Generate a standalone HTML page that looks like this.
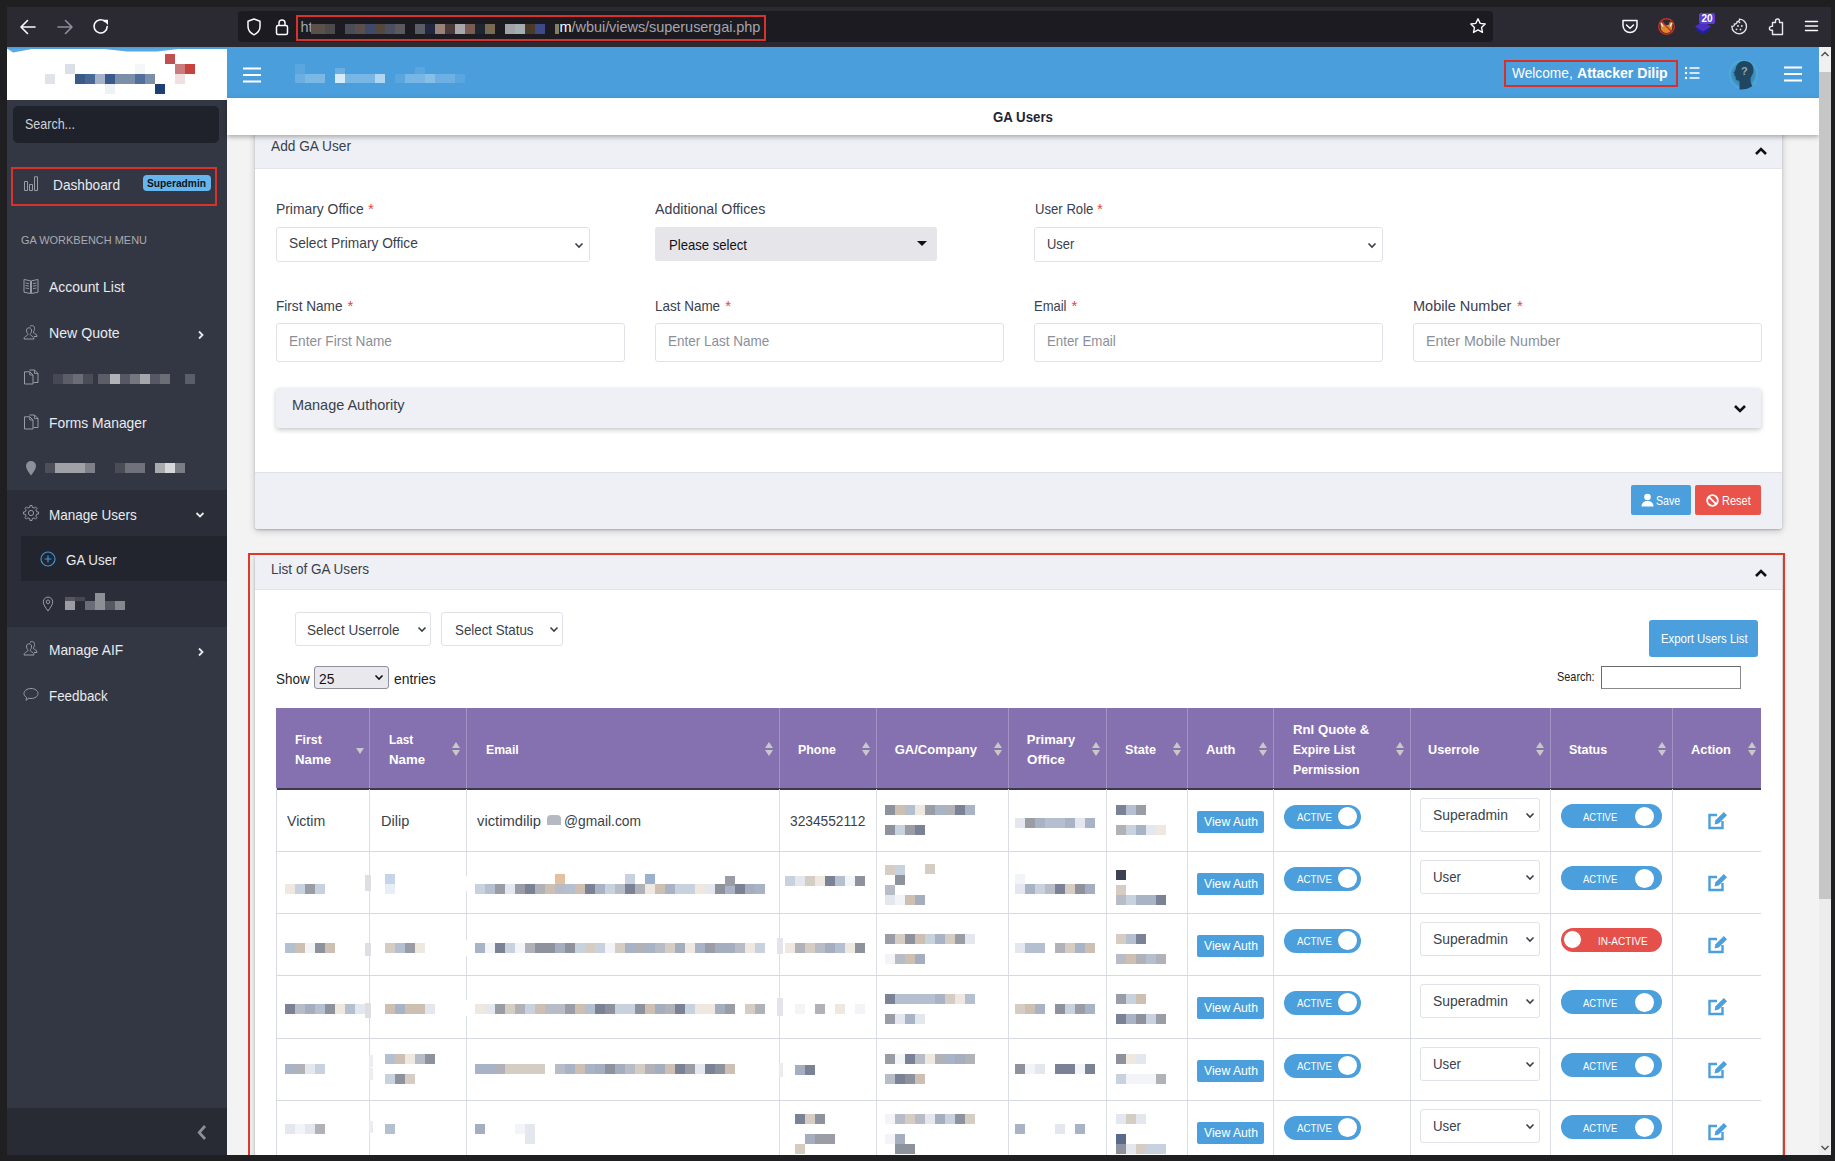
<!DOCTYPE html>
<html><head><meta charset="utf-8">
<style>
*{box-sizing:border-box}
html,body{margin:0;padding:0}
body{width:1835px;height:1161px;overflow:hidden;background:#1f1f21;position:relative;font-family:"Liberation Sans",sans-serif}
.a{position:absolute}
.t{white-space:nowrap}
</style></head><body>

<div class="a" style="left:7px;top:7px;width:1824px;height:40px;background:#2b2a33;"></div>
<div class="a" style="left:238px;top:11px;width:1255px;height:31px;background:#1c1b22;border-radius:4px"></div>
<svg class="a" style="left:18px;top:17px" width="20" height="20" viewBox="0 0 20 20"><path d="M17 10H3.5M9.5 3.5L3 10l6.5 6.5" stroke="#fbfbfe" stroke-width="1.6" fill="none" stroke-linecap="round" stroke-linejoin="round"/></svg>
<svg class="a" style="left:55px;top:17px" width="20" height="20" viewBox="0 0 20 20"><path d="M3 10h13.5M10.5 3.5L17 10l-6.5 6.5" stroke="#8f8f9d" stroke-width="1.6" fill="none" stroke-linecap="round" stroke-linejoin="round"/></svg>
<svg class="a" style="left:91px;top:17px" width="20" height="20" viewBox="0 0 20 20"><path d="M16.2 9.5A6.6 6.6 0 1 1 13.8 4.3" stroke="#fbfbfe" stroke-width="1.6" fill="none" stroke-linecap="round"/><path d="M11.8 2.8h5.2v5.2z" fill="#fbfbfe"/></svg>
<svg class="a" style="left:245px;top:17px" width="18" height="20" viewBox="0 0 18 20"><path d="M9 2L3 4.3v5.2c0 4 2.6 6.6 6 8.3 3.4-1.7 6-4.3 6-8.3V4.3z" stroke="#fbfbfe" stroke-width="1.5" fill="none" stroke-linejoin="round"/></svg>
<svg class="a" style="left:274px;top:17px" width="16" height="20" viewBox="0 0 16 20"><rect x="2.5" y="8.5" width="11" height="9" rx="1.5" stroke="#fbfbfe" stroke-width="1.5" fill="none"/><path d="M5 8.5V6a3 3 0 0 1 6 0v2.5" stroke="#fbfbfe" stroke-width="1.5" fill="none"/></svg>
<div class="a" style="left:296px;top:15px;width:470px;height:26px;background:transparent;border:2px solid #d8322a"></div>
<div class="a t" style="left:300.50px;top:18.47px;font-size:14.5px;line-height:19px;color:#a5a5ad;">ht</div>
<div class="a" style="left:311px;top:24px;width:14px;height:10px;background:#5b5149;"></div>
<div class="a" style="left:325px;top:24px;width:10px;height:10px;background:#4d4a4c;"></div>
<div class="a" style="left:345px;top:24px;width:10px;height:10px;background:#4a4d55;"></div>
<div class="a" style="left:355px;top:24px;width:10px;height:10px;background:#5a4f4c;"></div>
<div class="a" style="left:365px;top:24px;width:10px;height:10px;background:#3f4a6a;"></div>
<div class="a" style="left:375px;top:24px;width:10px;height:10px;background:#54483c;"></div>
<div class="a" style="left:385px;top:24px;width:10px;height:10px;background:#4a5060;"></div>
<div class="a" style="left:395px;top:24px;width:10px;height:10px;background:#5a5a5e;"></div>
<div class="a" style="left:415px;top:24px;width:10px;height:10px;background:#5a5d66;"></div>
<div class="a" style="left:425px;top:24px;width:10px;height:10px;background:#23263f;"></div>
<div class="a" style="left:435px;top:24px;width:10px;height:10px;background:#9a8278;"></div>
<div class="a" style="left:445px;top:24px;width:10px;height:10px;background:#4a3a38;"></div>
<div class="a" style="left:455px;top:24px;width:10px;height:10px;background:#a8a8ac;"></div>
<div class="a" style="left:465px;top:24px;width:10px;height:10px;background:#7a5c52;"></div>
<div class="a" style="left:475px;top:24px;width:10px;height:10px;background:#1e2630;"></div>
<div class="a" style="left:485px;top:24px;width:10px;height:10px;background:#7a6a50;"></div>
<div class="a" style="left:505px;top:24px;width:10px;height:10px;background:#a0a4a8;"></div>
<div class="a" style="left:515px;top:24px;width:10px;height:10px;background:#a4b0b0;"></div>
<div class="a" style="left:525px;top:24px;width:10px;height:10px;background:#4a3a28;"></div>
<div class="a" style="left:535px;top:24px;width:10px;height:10px;background:#3c4a88;"></div>
<div class="a" style="left:555px;top:24px;width:4px;height:10px;background:#8a7c60;"></div>
<div class="a t" style="left:559.50px;top:18.47px;font-size:14.5px;line-height:19px;color:#fbfbfe;letter-spacing:-0.05px">m<span style="color:#a5a5ad">/wbui/views/superusergai.php</span></div>
<svg class="a" style="left:1469px;top:17px" width="18" height="18" viewBox="0 0 18 18"><path d="M9 1.8l2.2 4.6 5 .6-3.7 3.4 1 5-4.5-2.5-4.5 2.5 1-5L1.8 7l5-.6z" stroke="#fbfbfe" stroke-width="1.4" fill="none" stroke-linejoin="round"/></svg>
<svg class="a" style="left:1621px;top:18px" width="18" height="17" viewBox="0 0 18 17"><path d="M2 2.5h14v5a7 7 0 0 1-14 0z" stroke="#fbfbfe" stroke-width="1.5" fill="none" stroke-linejoin="round"/><path d="M5.5 7l3.5 3.2L12.5 7" stroke="#fbfbfe" stroke-width="1.5" fill="none" stroke-linecap="round"/></svg>
<svg class="a" style="left:1657px;top:17px" width="19" height="19" viewBox="0 0 19 19"><path d="M3.5 6.5L6 4.5 7.5 8h4L13 4.5l2.5 2-.3 5.5c-1 2.5-3.2 4-5.7 4s-4.7-1.5-5.7-4z" fill="#e0882a"/><path d="M3.8 5.5l2 4M15.2 5.5l-2 4" stroke="#f0f0f0" stroke-width="1.4"/><circle cx="9.5" cy="9.5" r="7.8" stroke="#c0302a" stroke-width="1.4" fill="none"/><path d="M4 4l11 11" stroke="#c0302a" stroke-width="1.4"/></svg>
<svg class="a" style="left:1694px;top:19px" width="18" height="17" viewBox="0 0 18 17"><path d="M1 10.5l8-5 8 5-8 5z" fill="#22209a"/><path d="M1 7.5l8-5 8 5-8 5z" fill="#4a2fc0"/></svg>
<div class="a" style="left:1699px;top:13px;width:16px;height:11px;background:#5b3fd0;border-radius:2px;color:#fff;font-size:10px;font-weight:bold;line-height:11px;text-align:center">20</div>
<svg class="a" style="left:1730px;top:17px" width="18" height="19" viewBox="0 0 18 19"><path d="M9.5 2.2a7.3 7.3 0 1 1-7.6 7.2 2.2 2.2 0 0 0 2.6-2.4 2.2 2.2 0 0 0 2.6-2.4 2.2 2.2 0 0 0 2.4-2.4z" stroke="#e8e8ec" stroke-width="1.3" fill="none"/><circle cx="9.5" cy="5.3" r="0.9" fill="#e8e8ec"/><circle cx="8" cy="9" r="0.9" fill="#e8e8ec"/><circle cx="11.8" cy="9" r="0.9" fill="#e8e8ec"/><circle cx="6.5" cy="12.3" r="0.9" fill="#e8e8ec"/><circle cx="10.5" cy="12.5" r="0.9" fill="#e8e8ec"/></svg>
<svg class="a" style="left:1767px;top:17px" width="18" height="19" viewBox="0 0 18 19"><path d="M5.5 5.5H8.5V4a2 2 0 0 1 4 0v1.5h3v12h-10v-4.3H4.3a1.9 1.9 0 0 1 0-3.8h1.2z" stroke="#e8e8ec" stroke-width="1.4" fill="none" stroke-linejoin="round"/></svg>
<svg class="a" style="left:1804px;top:19px" width="15" height="14" viewBox="0 0 15 14"><path d="M1.5 2.5h12M1.5 7h12M1.5 11.5h12" stroke="#fbfbfe" stroke-width="1.5" stroke-linecap="round"/></svg>
<div class="a" style="left:7px;top:47px;width:1812px;height:1108px;background:#f3f3f3;"></div>
<div class="a" style="left:7px;top:100px;width:220px;height:1055px;background:#333743;"></div>
<div class="a" style="left:7px;top:47px;width:220px;height:53px;background:#fff;"></div>
<div class="a" style="left:7px;top:47px;width:220px;height:2px;background:#4a9edb;"></div>
<svg class="a" style="left:7px;top:47px" width="220" height="8" viewBox="0 0 220 8"><path d="M0 1.5L6 5.5L28 1.5z M92 1.5L120 4.5H150L176 1.5z" fill="#5aaae0"/></svg>
<div class="a" style="left:165px;top:54px;width:10px;height:10px;background:#c0504f;"></div>
<div class="a" style="left:65px;top:64px;width:10px;height:10px;background:#dae0e8;"></div>
<div class="a" style="left:135px;top:64px;width:10px;height:10px;background:#f5f6f8;"></div>
<div class="a" style="left:175px;top:64px;width:10px;height:10px;background:#c97b7d;"></div>
<div class="a" style="left:185px;top:64px;width:10px;height:10px;background:#c9423e;"></div>
<div class="a" style="left:45px;top:74px;width:10px;height:10px;background:#e0e4ea;"></div>
<div class="a" style="left:75px;top:74px;width:10px;height:10px;background:#3b5a8a;"></div>
<div class="a" style="left:85px;top:74px;width:10px;height:10px;background:#4a6894;"></div>
<div class="a" style="left:95px;top:74px;width:10px;height:10px;background:#a4b3c8;"></div>
<div class="a" style="left:105px;top:74px;width:10px;height:10px;background:#3b5a8a;"></div>
<div class="a" style="left:115px;top:74px;width:10px;height:10px;background:#7b8fab;"></div>
<div class="a" style="left:125px;top:74px;width:10px;height:10px;background:#7b8fab;"></div>
<div class="a" style="left:135px;top:74px;width:10px;height:10px;background:#526e9a;"></div>
<div class="a" style="left:145px;top:74px;width:10px;height:10px;background:#7b8fab;"></div>
<div class="a" style="left:175px;top:74px;width:10px;height:10px;background:#f2dfe1;"></div>
<div class="a" style="left:105px;top:84px;width:10px;height:10px;background:#eef1f5;"></div>
<div class="a" style="left:155px;top:84px;width:10px;height:10px;background:#1e3f74;"></div>
<div class="a" style="left:13px;top:106px;width:206px;height:37px;background:#1f222b;border-radius:5px"></div>
<div class="a t" style="left:25.00px;top:113.80px;font-size:15px;line-height:20px;color:#d0d2d6;transform:scaleX(0.8329);transform-origin:0 0;">Search...</div>
<div class="a" style="left:11px;top:167px;width:206px;height:39px;background:transparent;border:2px solid #d8322a"></div>
<svg class="a" style="left:23px;top:176px" width="16" height="16" viewBox="0 0 16 16"><path d="M1.5 14.5V5.5h3v9zM6.5 14.5V8.5h3v6zM11.5 14.5V0.8h3v13.7z" stroke="#9a9ca4" stroke-width="1" fill="none"/></svg>
<div class="a t" style="left:53.40px;top:174.60px;font-size:15px;line-height:20px;color:#e9ebee;transform:scaleX(0.9131);transform-origin:0 0;">Dashboard</div>
<div class="a" style="left:143px;top:175px;width:68px;height:16px;background:#66b5ec;border-radius:4px"></div>
<div class="a t" style="left:147.00px;top:176.01px;font-size:11.5px;line-height:15px;color:#0d1420;transform:scaleX(0.8878);transform-origin:0 0;font-weight:bold;">Superadmin</div>
<div class="a t" style="left:20.50px;top:233.11px;font-size:11.8px;line-height:15px;color:#a9abb1;transform:scaleX(0.9284);transform-origin:0 0;">GA WORKBENCH MENU</div>
<svg class="a" style="left:23px;top:278px" width="16" height="16" viewBox="0 0 16 16"><path d="M1 1.5l6.5 1.3v12.7L1 14.2zM15 1.5L8.5 2.8v12.7L15 14.2z" stroke="#9a9ca4" stroke-width="1" fill="none"/><path d="M2.5 5l3.5.6M2.5 7.5l3.5.6M2.5 10l3.5.6M13.5 5L10 5.6M13.5 7.5l-3.5.6M13.5 10l-3.5.6" stroke="#9a9ca4" stroke-width="0.9"/></svg>
<div class="a t" style="left:49.00px;top:277.30px;font-size:15px;line-height:20px;color:#e9ebee;transform:scaleX(0.9265);transform-origin:0 0;">Account List</div>
<svg class="a" style="left:23px;top:324px" width="16" height="16" viewBox="0 0 16 16"><path d="M1 15c0-2.5 2.5-3 3.5-3.8.6-.5.5-1.5 0-2C3.5 8.3 3.3 6 3.8 5c.6-1.5 3.6-1.8 4.5 0 .5 1 .4 3.3-.6 4.3-.5.5-.6 1.5 0 2 1 .7 3.3 1.2 3.3 3.7z" stroke="#9a9ca4" stroke-width="1" fill="none"/><path d="M7 2.3c1.5-1.5 4-.8 4.4 1 .3 1.2.1 3.2-.7 4-.4.5-.4 1.3.1 1.7.9.6 3.2 1 3.2 3.5h-3" stroke="#9a9ca4" stroke-width="1" fill="none"/></svg>
<div class="a t" style="left:49.00px;top:323.30px;font-size:15px;line-height:20px;color:#e9ebee;transform:scaleX(0.9423);transform-origin:0 0;">New Quote</div>
<svg class="a" style="left:197px;top:330px" width="8" height="10" viewBox="0 0 8 10"><path d="M2 1.5L5.5 5 2 8.5" stroke="#e8e8ea" stroke-width="1.8" fill="none"/></svg>
<svg class="a" style="left:23px;top:369px" width="16" height="16" viewBox="0 0 16 16"><path d="M1.5 2.8H6.8L10 6V15H1.5z" stroke="#9a9ca4" stroke-width="1" fill="none" stroke-linejoin="round"/><path d="M6.8 2.8V6H10" stroke="#9a9ca4" stroke-width="0.9" fill="none"/><path d="M6.5 1H11.5L15 4.5V13.5H10.5" stroke="#9a9ca4" stroke-width="1" fill="none" stroke-linejoin="round"/><path d="M11.5 1V4.5H15" stroke="#9a9ca4" stroke-width="0.9" fill="none"/></svg>
<div class="a" style="left:53px;top:374px;width:10px;height:10px;background:#464953;"></div>
<div class="a" style="left:63px;top:374px;width:10px;height:10px;background:#5b5e68;"></div>
<div class="a" style="left:73px;top:374px;width:10px;height:10px;background:#6a6d76;"></div>
<div class="a" style="left:83px;top:374px;width:10px;height:10px;background:#4a4d58;"></div>
<div class="a" style="left:98px;top:374px;width:12px;height:10px;background:#5b5e68;"></div>
<div class="a" style="left:110px;top:374px;width:10px;height:10px;background:#b0b2b8;"></div>
<div class="a" style="left:120px;top:374px;width:10px;height:10px;background:#565963;"></div>
<div class="a" style="left:130px;top:374px;width:10px;height:10px;background:#74777f;"></div>
<div class="a" style="left:140px;top:374px;width:10px;height:10px;background:#a4a6ac;"></div>
<div class="a" style="left:150px;top:374px;width:10px;height:10px;background:#565963;"></div>
<div class="a" style="left:160px;top:374px;width:10px;height:10px;background:#6b6e76;"></div>
<div class="a" style="left:185px;top:374px;width:10px;height:10px;background:#5b5e68;"></div>
<svg class="a" style="left:23px;top:414px" width="16" height="16" viewBox="0 0 16 16"><path d="M1.5 2.8H6.8L10 6V15H1.5z" stroke="#9a9ca4" stroke-width="1" fill="none" stroke-linejoin="round"/><path d="M6.8 2.8V6H10" stroke="#9a9ca4" stroke-width="0.9" fill="none"/><path d="M6.5 1H11.5L15 4.5V13.5H10.5" stroke="#9a9ca4" stroke-width="1" fill="none" stroke-linejoin="round"/><path d="M11.5 1V4.5H15" stroke="#9a9ca4" stroke-width="0.9" fill="none"/></svg>
<div class="a t" style="left:49.00px;top:413.30px;font-size:15px;line-height:20px;color:#e9ebee;transform:scaleX(0.9219);transform-origin:0 0;">Forms Manager</div>
<svg class="a" style="left:25px;top:460px" width="12" height="16" viewBox="0 0 12 16"><path d="M6 15.5C3 11.5 1 8.5 1 6a5 5 0 0 1 10 0c0 2.5-2 5.5-5 9.5z" fill="#8d9099"/></svg>
<div class="a" style="left:45px;top:463px;width:10px;height:10px;background:#4d5059;"></div>
<div class="a" style="left:55px;top:463px;width:30px;height:10px;background:#9fa1a7;"></div>
<div class="a" style="left:85px;top:463px;width:10px;height:10px;background:#7d8088;"></div>
<div class="a" style="left:115px;top:463px;width:10px;height:10px;background:#4a4d56;"></div>
<div class="a" style="left:125px;top:463px;width:20px;height:10px;background:#6f727a;"></div>
<div class="a" style="left:155px;top:463px;width:10px;height:10px;background:#a8aab0;"></div>
<div class="a" style="left:165px;top:463px;width:10px;height:10px;background:#d6d7da;"></div>
<div class="a" style="left:175px;top:463px;width:10px;height:10px;background:#7a7d85;"></div>
<div class="a" style="left:7px;top:490px;width:220px;height:137px;background:#2b2e38;"></div>
<div class="a" style="left:21px;top:536px;width:206px;height:45px;background:#22252d;"></div>
<svg class="a" style="left:22px;top:504px" width="18" height="18" viewBox="0 0 18 18"><path d="M14.67 7.76 L16.53 7.96 L16.53 10.04 L14.67 10.24 L13.88 12.13 L15.06 13.59 L13.59 15.06 L12.13 13.88 L10.24 14.67 L10.04 16.53 L7.96 16.53 L7.76 14.67 L5.87 13.88 L4.41 15.06 L2.94 13.59 L4.12 12.13 L3.33 10.24 L1.47 10.04 L1.47 7.96 L3.33 7.76 L4.12 5.87 L2.94 4.41 L4.41 2.94 L5.87 4.12 L7.76 3.33 L7.96 1.47 L10.04 1.47 L10.24 3.33 L12.13 4.12 L13.59 2.94 L15.06 4.41 L13.88 5.87Z" stroke="#9a9ca4" stroke-width="1" fill="none" stroke-linejoin="round"/><circle cx="9" cy="9" r="2.6" stroke="#9a9ca4" stroke-width="1" fill="none"/></svg>
<div class="a t" style="left:49.00px;top:504.80px;font-size:15px;line-height:20px;color:#e9ebee;transform:scaleX(0.9001);transform-origin:0 0;">Manage Users</div>
<svg class="a" style="left:195px;top:511px" width="10" height="8" viewBox="0 0 10 8"><path d="M1.5 2L5 5.5 8.5 2" stroke="#e8e8ea" stroke-width="1.8" fill="none"/></svg>
<svg class="a" style="left:40px;top:551px" width="16" height="16" viewBox="0 0 16 16"><circle cx="8" cy="8" r="7" stroke="#3d95d6" stroke-width="1.2" fill="none"/><path d="M8 4.5v7M4.5 8h7" stroke="#3d95d6" stroke-width="1.2"/></svg>
<div class="a t" style="left:66.00px;top:549.60px;font-size:15px;line-height:20px;color:#e9ebee;transform:scaleX(0.8927);transform-origin:0 0;">GA User</div>
<svg class="a" style="left:42px;top:596px" width="12" height="16" viewBox="0 0 12 16"><path d="M6 15C3.5 11.5 1.3 8.5 1.3 5.8a4.7 4.7 0 0 1 9.4 0c0 2.7-2.2 5.7-4.7 9.2z" stroke="#9a9ca4" stroke-width="1" fill="none"/><circle cx="6" cy="5.8" r="1.8" stroke="#9a9ca4" stroke-width="1" fill="none"/></svg>
<div class="a" style="left:65px;top:597px;width:10px;height:4px;background:#545761;"></div>
<div class="a" style="left:65px;top:601px;width:10px;height:9px;background:#9b9da3;"></div>
<div class="a" style="left:75px;top:597px;width:10px;height:4px;background:#454852;"></div>
<div class="a" style="left:85px;top:601px;width:10px;height:9px;background:#6a6d75;"></div>
<div class="a" style="left:95px;top:593px;width:10px;height:17px;background:#8c8f96;"></div>
<div class="a" style="left:105px;top:601px;width:10px;height:9px;background:#55585f;"></div>
<div class="a" style="left:115px;top:601px;width:10px;height:9px;background:#85878e;"></div>
<svg class="a" style="left:23px;top:640px" width="16" height="16" viewBox="0 0 16 16"><path d="M1 15c0-2.5 2.5-3 3.5-3.8.6-.5.5-1.5 0-2C3.5 8.3 3.3 6 3.8 5c.6-1.5 3.6-1.8 4.5 0 .5 1 .4 3.3-.6 4.3-.5.5-.6 1.5 0 2 1 .7 3.3 1.2 3.3 3.7z" stroke="#9a9ca4" stroke-width="1" fill="none"/><path d="M7 2.3c1.5-1.5 4-.8 4.4 1 .3 1.2.1 3.2-.7 4-.4.5-.4 1.3.1 1.7.9.6 3.2 1 3.2 3.5h-3" stroke="#9a9ca4" stroke-width="1" fill="none"/></svg>
<div class="a t" style="left:49.00px;top:639.80px;font-size:15px;line-height:20px;color:#e9ebee;transform:scaleX(0.9174);transform-origin:0 0;">Manage AIF</div>
<svg class="a" style="left:197px;top:647px" width="8" height="10" viewBox="0 0 8 10"><path d="M2 1.5L5.5 5 2 8.5" stroke="#e8e8ea" stroke-width="1.8" fill="none"/></svg>
<svg class="a" style="left:23px;top:687px" width="16" height="15" viewBox="0 0 16 15"><path d="M8 1.5c3.9 0 7 2.2 7 5s-3.1 5-7 5c-.8 0-1.5-.1-2.2-.3L3 13.3l.6-2.8C2 9.6 1 8.1 1 6.5c0-2.8 3.1-5 7-5z" stroke="#9a9ca4" stroke-width="1" fill="none"/></svg>
<div class="a t" style="left:49.00px;top:685.50px;font-size:15px;line-height:20px;color:#e9ebee;transform:scaleX(0.8906);transform-origin:0 0;">Feedback</div>
<div class="a" style="left:7px;top:1108px;width:220px;height:47px;background:#282b34;"></div>
<svg class="a" style="left:196px;top:1124px" width="11" height="17" viewBox="0 0 11 17"><path d="M9 2L3.2 8.5 9 15" stroke="#8e9098" stroke-width="2.7" fill="none"/></svg>
<div class="a" style="left:227px;top:47px;width:1592px;height:51px;background:#4a9edb;"></div>
<svg class="a" style="left:242px;top:66.5px" width="20" height="16" viewBox="0 0 20 16"><path d="M1 1.5h18M1 8h18M1 14.5h18" stroke="#fff" stroke-width="2"/></svg>
<div class="a" style="left:295px;top:64px;width:10px;height:10px;background:#5aa6de;"></div>
<div class="a" style="left:295px;top:74px;width:10px;height:9px;background:#6aaee2;"></div>
<div class="a" style="left:305px;top:74px;width:20px;height:9px;background:#7ab8e6;"></div>
<div class="a" style="left:335px;top:68px;width:10px;height:6px;background:#6aaee2;"></div>
<div class="a" style="left:335px;top:74px;width:10px;height:9px;background:#d6ebf9;"></div>
<div class="a" style="left:345px;top:74px;width:30px;height:9px;background:#78b6e5;"></div>
<div class="a" style="left:375px;top:74px;width:10px;height:9px;background:#b0d6f2;"></div>
<div class="a" style="left:395px;top:74px;width:10px;height:9px;background:#5aa6de;"></div>
<div class="a" style="left:405px;top:74px;width:20px;height:9px;background:#78b6e5;"></div>
<div class="a" style="left:415px;top:67px;width:10px;height:7px;background:#5aa6de;"></div>
<div class="a" style="left:425px;top:74px;width:10px;height:9px;background:#86c0e9;"></div>
<div class="a" style="left:435px;top:74px;width:20px;height:9px;background:#6eb0e3;"></div>
<div class="a" style="left:455px;top:74px;width:10px;height:9px;background:#5aa6de;"></div>
<div class="a" style="left:1504px;top:60px;width:174px;height:27px;background:transparent;border:2px solid #d5312a"></div>
<div class="a t" style="left:1511.50px;top:63.43px;font-size:15.5px;line-height:20px;color:#fff;transform:scaleX(0.8846);transform-origin:0 0;">Welcome,</div>
<div class="a t" style="left:1577.10px;top:63.43px;font-size:15.5px;line-height:20px;color:#fff;transform:scaleX(0.9078);transform-origin:0 0;font-weight:bold;">Attacker Dilip</div>
<svg class="a" style="left:1684px;top:66px" width="18" height="14" viewBox="0 0 18 14"><circle cx="2" cy="2" r="1.2" fill="#fff"/><circle cx="2" cy="7" r="1.2" fill="#fff"/><circle cx="2" cy="12" r="1.2" fill="#fff"/><path d="M5.5 2h10M5.5 7h10M5.5 12h10" stroke="#fff" stroke-width="1.5"/></svg>
<svg class="a" style="left:1729px;top:60px" width="30" height="30" viewBox="0 0 30 30"><defs><radialGradient id="av" cx="50%" cy="50%" r="50%"><stop offset="0%" stop-color="#2a6f9a"/><stop offset="75%" stop-color="#3a8fbf"/><stop offset="100%" stop-color="#55aede"/></radialGradient></defs><circle cx="14.5" cy="14.5" r="14.5" fill="url(#av)"/><path d="M10.5 29.5V21c-2-.5-3.5-1-3.8-2.5L6.5 16 5 15.5l1-1.5-1.5-1.2c1-1.3 2-2.3 2.3-4.3C7.5 3.5 11 1 15.5 1 21 1 24.5 4.5 24.5 10c0 4-2.5 6-3 8.5 0 3 .5 5.5 2 7.5-3.5 2.8-8.5 3.8-13 3.5z" fill="#1f4762"/><text x="15.3" y="15" font-size="11" font-family="Liberation Sans" font-weight="bold" fill="#9aa4ac" text-anchor="middle">?</text></svg>
<svg class="a" style="left:1783px;top:66px" width="20" height="16" viewBox="0 0 20 16"><path d="M1 1.5h18M1 8h18M1 14.5h18" stroke="#fff" stroke-width="2"/></svg>
<div class="a" style="left:0;top:0;width:1819px;height:1155px;overflow:hidden">
<div class="a" style="left:255px;top:120px;width:1527px;height:409px;background:#fff;border-radius:3px;box-shadow:0 2px 7px rgba(0,0,0,.2),0 1px 2px rgba(0,0,0,.18)"></div>
<div class="a" style="left:255px;top:120px;width:1527px;height:49px;background:#eef0f5;border-bottom:1px solid #e1e4ea"></div>
<div class="a t" style="left:271.00px;top:137.07px;font-size:14.5px;line-height:19px;color:#3a3f4b;transform:scaleX(0.9454);transform-origin:0 0;">Add GA User</div>
<svg class="a" style="left:1754px;top:146px" width="14" height="10" viewBox="0 0 14 10"><path d="M2 8L7 3l5 5" stroke="#111" stroke-width="2.6" fill="none"/></svg>
<div class="a" style="left:227px;top:98px;width:1592px;height:37px;background:#fff;box-shadow:0 2px 5px rgba(0,0,0,.3);z-index:3"></div>
<div class="a t" style="left:993.00px;top:108.47px;font-size:14.5px;line-height:19px;color:#1f2535;transform:scaleX(0.9153);transform-origin:0 0;font-weight:bold;z-index:4;">GA Users</div>
<div class="a t" style="left:276.10px;top:198.80px;font-size:15px;line-height:20px;color:#3a4050;transform:scaleX(0.9246);transform-origin:0 0;">Primary Office</div>
<div class="a t" style="left:368.00px;top:198.80px;font-size:15px;line-height:20px;color:#e5453f;">*</div>
<div class="a" style="left:276px;top:227px;width:314px;height:35px;background:#fff;border:1px solid #dfe2e8;border-radius:3px;"></div>
<div class="a t" style="left:289.00px;top:233.40px;font-size:15px;line-height:20px;color:#3a3f4b;transform:scaleX(0.9161);transform-origin:0 0;">Select Primary Office</div>
<svg class="a" style="left:574px;top:242px" width="10" height="7" viewBox="0 0 10 7"><path d="M1.5 1.5L5 5 8.5 1.5" stroke="#3a3f4b" stroke-width="1.6" fill="none"/></svg>
<div class="a t" style="left:655.20px;top:198.80px;font-size:15px;line-height:20px;color:#3a4050;transform:scaleX(0.9471);transform-origin:0 0;">Additional Offices</div>
<div class="a" style="left:655px;top:227px;width:282px;height:34px;background:#e6e6ea;border-radius:3px"></div>
<div class="a t" style="left:668.50px;top:235.40px;font-size:15px;line-height:20px;color:#111;transform:scaleX(0.8742);transform-origin:0 0;">Please select</div>
<svg class="a" style="left:916px;top:240px" width="12" height="7" viewBox="0 0 12 7"><path d="M1 1h10L6 6z" fill="#111"/></svg>
<div class="a t" style="left:1034.60px;top:198.80px;font-size:15px;line-height:20px;color:#3a4050;transform:scaleX(0.8757);transform-origin:0 0;">User Role</div>
<div class="a t" style="left:1097.00px;top:198.80px;font-size:15px;line-height:20px;color:#e5453f;">*</div>
<div class="a" style="left:1034px;top:227px;width:349px;height:35px;background:#fff;border:1px solid #dfe2e8;border-radius:3px;"></div>
<div class="a t" style="left:1047.40px;top:233.80px;font-size:15px;line-height:20px;color:#3a3f4b;transform:scaleX(0.8622);transform-origin:0 0;">User</div>
<svg class="a" style="left:1367px;top:242px" width="10" height="7" viewBox="0 0 10 7"><path d="M1.5 1.5L5 5 8.5 1.5" stroke="#3a3f4b" stroke-width="1.6" fill="none"/></svg>
<div class="a t" style="left:276.30px;top:295.80px;font-size:15px;line-height:20px;color:#3a4050;transform:scaleX(0.9068);transform-origin:0 0;">First Name</div>
<div class="a t" style="left:347.40px;top:295.80px;font-size:15px;line-height:20px;color:#e5453f;">*</div>
<div class="a" style="left:276px;top:323px;width:349px;height:39px;background:#fff;border:1px solid #dfe2e8;border-radius:3px;"></div>
<div class="a t" style="left:289.30px;top:331.30px;font-size:15px;line-height:20px;color:#8a8f99;transform:scaleX(0.9078);transform-origin:0 0;">Enter First Name</div>
<div class="a t" style="left:655.30px;top:295.80px;font-size:15px;line-height:20px;color:#3a4050;transform:scaleX(0.8976);transform-origin:0 0;">Last Name</div>
<div class="a t" style="left:725.20px;top:295.80px;font-size:15px;line-height:20px;color:#e5453f;">*</div>
<div class="a" style="left:655px;top:323px;width:349px;height:39px;background:#fff;border:1px solid #dfe2e8;border-radius:3px;"></div>
<div class="a t" style="left:668.30px;top:331.30px;font-size:15px;line-height:20px;color:#8a8f99;transform:scaleX(0.8992);transform-origin:0 0;">Enter Last Name</div>
<div class="a t" style="left:1034.30px;top:295.80px;font-size:15px;line-height:20px;color:#3a4050;transform:scaleX(0.8637);transform-origin:0 0;">Email</div>
<div class="a t" style="left:1071.40px;top:295.80px;font-size:15px;line-height:20px;color:#e5453f;">*</div>
<div class="a" style="left:1034px;top:323px;width:349px;height:39px;background:#fff;border:1px solid #dfe2e8;border-radius:3px;"></div>
<div class="a t" style="left:1047.30px;top:331.30px;font-size:15px;line-height:20px;color:#8a8f99;transform:scaleX(0.8861);transform-origin:0 0;">Enter Email</div>
<div class="a t" style="left:1413.30px;top:295.80px;font-size:15px;line-height:20px;color:#3a4050;transform:scaleX(0.9676);transform-origin:0 0;">Mobile Number</div>
<div class="a t" style="left:1517.00px;top:295.80px;font-size:15px;line-height:20px;color:#e5453f;">*</div>
<div class="a" style="left:1413px;top:323px;width:349px;height:39px;background:#fff;border:1px solid #dfe2e8;border-radius:3px;"></div>
<div class="a t" style="left:1426.30px;top:331.30px;font-size:15px;line-height:20px;color:#8a8f99;transform:scaleX(0.9476);transform-origin:0 0;">Enter Mobile Number</div>
<div class="a" style="left:276px;top:388px;width:1485px;height:40px;background:#eef0f5;border-radius:3px;box-shadow:0 2px 5px rgba(0,0,0,.22)"></div>
<div class="a t" style="left:292.20px;top:394.50px;font-size:15px;line-height:20px;color:#3a3f4b;transform:scaleX(0.9636);transform-origin:0 0;">Manage Authority</div>
<svg class="a" style="left:1733px;top:404px" width="14" height="10" viewBox="0 0 14 10"><path d="M2 2l5 5 5-5" stroke="#111" stroke-width="2.6" fill="none"/></svg>
<div class="a" style="left:255px;top:472px;width:1527px;height:57px;background:#eef0f5;border-top:1px solid #dfe2e8;border-radius:0 0 3px 3px"></div>
<div class="a" style="left:1631px;top:485px;width:60px;height:30px;background:#4a9fdc;border-radius:2px"></div>
<svg class="a" style="left:1641px;top:493px" width="13" height="14" viewBox="0 0 13 14"><circle cx="6.5" cy="4" r="3.3" fill="#fff"/><path d="M0.5 13.5c0-3.5 2.5-5.5 6-5.5s6 2 6 5.5z" fill="#fff"/></svg>
<div class="a t" style="left:1655.80px;top:491.82px;font-size:13.5px;line-height:18px;color:#fff;transform:scaleX(0.7866);transform-origin:0 0;">Save</div>
<div class="a" style="left:1695px;top:485px;width:66px;height:30px;background:#e9534a;border-radius:2px"></div>
<svg class="a" style="left:1706px;top:494px" width="13" height="13" viewBox="0 0 13 13"><circle cx="6.5" cy="6.5" r="5.3" stroke="#fff" stroke-width="1.8" fill="none"/><path d="M2.8 2.8l7.4 7.4" stroke="#fff" stroke-width="1.8"/></svg>
<div class="a t" style="left:1722.00px;top:491.82px;font-size:13.5px;line-height:18px;color:#fff;transform:scaleX(0.8167);transform-origin:0 0;">Reset</div>
<div class="a" style="left:255px;top:555px;width:1527px;height:700px;background:#fff;box-shadow:0 2px 7px rgba(0,0,0,.2),0 1px 2px rgba(0,0,0,.18)"></div>
<div class="a" style="left:255px;top:555px;width:1527px;height:35px;background:#eef0f5;border-bottom:1px solid #e1e4ea"></div>
<div class="a" style="left:248px;top:553px;width:1537px;height:620px;background:transparent;border:2px solid #dd3a2c;z-index:5"></div>
<div class="a t" style="left:271.00px;top:558.80px;font-size:15px;line-height:20px;color:#3a3f4b;transform:scaleX(0.9043);transform-origin:0 0;">List of GA Users</div>
<svg class="a" style="left:1754px;top:568px" width="14" height="10" viewBox="0 0 14 10"><path d="M2 8L7 3l5 5" stroke="#111" stroke-width="2.6" fill="none"/></svg>
<div class="a" style="left:295px;top:612px;width:136px;height:34px;background:#fff;border:1px solid #dfe2e8;border-radius:3px;"></div>
<div class="a t" style="left:307.00px;top:619.70px;font-size:15px;line-height:20px;color:#3a3f4b;transform:scaleX(0.9031);transform-origin:0 0;">Select Userrole</div>
<svg class="a" style="left:416.6px;top:626px" width="10" height="7" viewBox="0 0 10 7"><path d="M1.5 1.5L5 5 8.5 1.5" stroke="#3a3f4b" stroke-width="1.6" fill="none"/></svg>
<div class="a" style="left:441px;top:612px;width:122px;height:34px;background:#fff;border:1px solid #dfe2e8;border-radius:3px;"></div>
<div class="a t" style="left:454.50px;top:619.70px;font-size:15px;line-height:20px;color:#3a3f4b;transform:scaleX(0.8882);transform-origin:0 0;">Select Status</div>
<svg class="a" style="left:548.7px;top:626px" width="10" height="7" viewBox="0 0 10 7"><path d="M1.5 1.5L5 5 8.5 1.5" stroke="#3a3f4b" stroke-width="1.6" fill="none"/></svg>
<div class="a" style="left:1649px;top:620px;width:109px;height:37px;background:#4a9fdc;border-radius:3px"></div>
<div class="a t" style="left:1661.00px;top:629.72px;font-size:13.5px;line-height:18px;color:#fff;transform:scaleX(0.8436);transform-origin:0 0;">Export Users List</div>
<div class="a t" style="left:276.00px;top:668.50px;font-size:15px;line-height:20px;color:#222;transform:scaleX(0.8946);transform-origin:0 0;">Show</div>
<div class="a" style="left:314px;top:665.5px;width:75px;height:23px;background:#e9e9ed;border:1px solid #8f8f9d;border-radius:3px"></div>
<div class="a t" style="left:319.30px;top:668.50px;font-size:15px;line-height:20px;color:#111;transform:scaleX(0.9173);transform-origin:0 0;">25</div>
<svg class="a" style="left:374px;top:674px" width="10" height="7" viewBox="0 0 10 7"><path d="M1.5 1.5L5 5 8.5 1.5" stroke="#111" stroke-width="1.6" fill="none"/></svg>
<div class="a t" style="left:393.50px;top:668.50px;font-size:15px;line-height:20px;color:#222;transform:scaleX(0.9286);transform-origin:0 0;">entries</div>
<div class="a t" style="left:1557.40px;top:668.32px;font-size:13.5px;line-height:18px;color:#222;transform:scaleX(0.8082);transform-origin:0 0;">Search:</div>
<div class="a" style="left:1601px;top:666px;width:140px;height:23px;background:#fff;border:1px solid #8a8a8a;border-top-color:#6a6a6a;border-left-color:#6a6a6a"></div>
<div class="a" style="left:276px;top:708px;width:1485px;height:80px;background:#8671b0;"></div>
<div class="a" style="left:276px;top:788px;width:1485px;height:1.5px;background:#3b3850;"></div>
<div class="a" style="left:276px;top:788px;width:1px;height:400px;background:#d6d8e2;"></div>
<div class="a" style="left:369px;top:708px;width:1px;height:80px;background:#a294c4;"></div>
<div class="a" style="left:369px;top:789px;width:1px;height:400px;background:#dcdee6;"></div>
<div class="a" style="left:466px;top:708px;width:1px;height:80px;background:#a294c4;"></div>
<div class="a" style="left:466px;top:789px;width:1px;height:400px;background:#dcdee6;"></div>
<div class="a" style="left:779px;top:708px;width:1px;height:80px;background:#a294c4;"></div>
<div class="a" style="left:779px;top:789px;width:1px;height:400px;background:#dcdee6;"></div>
<div class="a" style="left:876px;top:708px;width:1px;height:80px;background:#a294c4;"></div>
<div class="a" style="left:876px;top:789px;width:1px;height:400px;background:#dcdee6;"></div>
<div class="a" style="left:1008px;top:708px;width:1px;height:80px;background:#a294c4;"></div>
<div class="a" style="left:1008px;top:789px;width:1px;height:400px;background:#dcdee6;"></div>
<div class="a" style="left:1106px;top:708px;width:1px;height:80px;background:#a294c4;"></div>
<div class="a" style="left:1106px;top:789px;width:1px;height:400px;background:#dcdee6;"></div>
<div class="a" style="left:1187px;top:708px;width:1px;height:80px;background:#a294c4;"></div>
<div class="a" style="left:1187px;top:789px;width:1px;height:400px;background:#dcdee6;"></div>
<div class="a" style="left:1273px;top:708px;width:1px;height:80px;background:#a294c4;"></div>
<div class="a" style="left:1273px;top:789px;width:1px;height:400px;background:#dcdee6;"></div>
<div class="a" style="left:1410px;top:708px;width:1px;height:80px;background:#a294c4;"></div>
<div class="a" style="left:1410px;top:789px;width:1px;height:400px;background:#dcdee6;"></div>
<div class="a" style="left:1550px;top:708px;width:1px;height:80px;background:#a294c4;"></div>
<div class="a" style="left:1550px;top:789px;width:1px;height:400px;background:#dcdee6;"></div>
<div class="a" style="left:1672px;top:708px;width:1px;height:80px;background:#a294c4;"></div>
<div class="a" style="left:1672px;top:789px;width:1px;height:400px;background:#dcdee6;"></div>
<div class="a" style="left:276px;top:851px;width:1485px;height:1px;background:#d6d8e2;"></div>
<div class="a" style="left:276px;top:913px;width:1485px;height:1px;background:#d6d8e2;"></div>
<div class="a" style="left:276px;top:975px;width:1485px;height:1px;background:#d6d8e2;"></div>
<div class="a" style="left:276px;top:1038px;width:1485px;height:1px;background:#d6d8e2;"></div>
<div class="a" style="left:276px;top:1100px;width:1485px;height:1px;background:#d6d8e2;"></div>
<div class="a t" style="left:295.00px;top:730.79px;font-size:13px;line-height:17px;color:#fff;transform:scaleX(0.9513);transform-origin:0 0;font-weight:bold;">First</div>
<div class="a t" style="left:295.00px;top:750.79px;font-size:13px;line-height:17px;color:#fff;transform:scaleX(1.0166);transform-origin:0 0;font-weight:bold;">Name</div>
<div class="a t" style="left:388.90px;top:730.79px;font-size:13px;line-height:17px;color:#fff;transform:scaleX(0.9017);transform-origin:0 0;font-weight:bold;">Last</div>
<div class="a t" style="left:388.90px;top:750.79px;font-size:13px;line-height:17px;color:#fff;transform:scaleX(1.0166);transform-origin:0 0;font-weight:bold;">Name</div>
<div class="a t" style="left:485.60px;top:740.79px;font-size:13px;line-height:17px;color:#fff;transform:scaleX(0.9428);transform-origin:0 0;font-weight:bold;">Email</div>
<div class="a t" style="left:798.30px;top:740.79px;font-size:13px;line-height:17px;color:#fff;transform:scaleX(0.9540);transform-origin:0 0;font-weight:bold;">Phone</div>
<div class="a t" style="left:894.70px;top:740.79px;font-size:13px;line-height:17px;color:#fff;font-weight:bold;">GA/Company</div>
<div class="a t" style="left:1026.80px;top:730.79px;font-size:13px;line-height:17px;color:#fff;font-weight:bold;">Primary</div>
<div class="a t" style="left:1026.80px;top:750.79px;font-size:13px;line-height:17px;color:#fff;transform:scaleX(1.0314);transform-origin:0 0;font-weight:bold;">Office</div>
<div class="a t" style="left:1125.00px;top:740.79px;font-size:13px;line-height:17px;color:#fff;transform:scaleX(0.9784);transform-origin:0 0;font-weight:bold;">State</div>
<div class="a t" style="left:1205.70px;top:740.79px;font-size:13px;line-height:17px;color:#fff;transform:scaleX(0.9932);transform-origin:0 0;font-weight:bold;">Auth</div>
<div class="a t" style="left:1292.50px;top:720.79px;font-size:13px;line-height:17px;color:#fff;transform:scaleX(1.0146);transform-origin:0 0;font-weight:bold;">Rnl Quote &amp;</div>
<div class="a t" style="left:1292.50px;top:740.79px;font-size:13px;line-height:17px;color:#fff;transform:scaleX(0.9328);transform-origin:0 0;font-weight:bold;">Expire List</div>
<div class="a t" style="left:1292.50px;top:760.79px;font-size:13px;line-height:17px;color:#fff;transform:scaleX(0.9489);transform-origin:0 0;font-weight:bold;">Permission</div>
<div class="a t" style="left:1428.30px;top:740.79px;font-size:13px;line-height:17px;color:#fff;transform:scaleX(0.9724);transform-origin:0 0;font-weight:bold;">Userrole</div>
<div class="a t" style="left:1568.90px;top:740.79px;font-size:13px;line-height:17px;color:#fff;transform:scaleX(0.9615);transform-origin:0 0;font-weight:bold;">Status</div>
<div class="a t" style="left:1691.00px;top:740.79px;font-size:13px;line-height:17px;color:#fff;transform:scaleX(0.9866);transform-origin:0 0;font-weight:bold;">Action</div>
<svg class="a" style="left:355px;top:747px" width="10" height="8" viewBox="0 0 10 8"><path d="M1 1h8L5 7z" fill="#c8c8c8"/></svg>
<svg class="a" style="left:451px;top:741px" width="10" height="16" viewBox="0 0 10 16"><path d="M1 7L5 1l4 6z" fill="#c8c8c8"/><path d="M1 9h8l-4 6z" fill="#c8c8c8"/></svg>
<svg class="a" style="left:764px;top:741px" width="10" height="16" viewBox="0 0 10 16"><path d="M1 7L5 1l4 6z" fill="#c8c8c8"/><path d="M1 9h8l-4 6z" fill="#c8c8c8"/></svg>
<svg class="a" style="left:861px;top:741px" width="10" height="16" viewBox="0 0 10 16"><path d="M1 7L5 1l4 6z" fill="#c8c8c8"/><path d="M1 9h8l-4 6z" fill="#c8c8c8"/></svg>
<svg class="a" style="left:993px;top:741px" width="10" height="16" viewBox="0 0 10 16"><path d="M1 7L5 1l4 6z" fill="#c8c8c8"/><path d="M1 9h8l-4 6z" fill="#c8c8c8"/></svg>
<svg class="a" style="left:1091px;top:741px" width="10" height="16" viewBox="0 0 10 16"><path d="M1 7L5 1l4 6z" fill="#c8c8c8"/><path d="M1 9h8l-4 6z" fill="#c8c8c8"/></svg>
<svg class="a" style="left:1172px;top:741px" width="10" height="16" viewBox="0 0 10 16"><path d="M1 7L5 1l4 6z" fill="#c8c8c8"/><path d="M1 9h8l-4 6z" fill="#c8c8c8"/></svg>
<svg class="a" style="left:1258px;top:741px" width="10" height="16" viewBox="0 0 10 16"><path d="M1 7L5 1l4 6z" fill="#c8c8c8"/><path d="M1 9h8l-4 6z" fill="#c8c8c8"/></svg>
<svg class="a" style="left:1395px;top:741px" width="10" height="16" viewBox="0 0 10 16"><path d="M1 7L5 1l4 6z" fill="#c8c8c8"/><path d="M1 9h8l-4 6z" fill="#c8c8c8"/></svg>
<svg class="a" style="left:1535px;top:741px" width="10" height="16" viewBox="0 0 10 16"><path d="M1 7L5 1l4 6z" fill="#c8c8c8"/><path d="M1 9h8l-4 6z" fill="#c8c8c8"/></svg>
<svg class="a" style="left:1657px;top:741px" width="10" height="16" viewBox="0 0 10 16"><path d="M1 7L5 1l4 6z" fill="#c8c8c8"/><path d="M1 9h8l-4 6z" fill="#c8c8c8"/></svg>
<svg class="a" style="left:1747px;top:741px" width="10" height="16" viewBox="0 0 10 16"><path d="M1 7L5 1l4 6z" fill="#c8c8c8"/><path d="M1 9h8l-4 6z" fill="#c8c8c8"/></svg>
<div class="a t" style="left:287.30px;top:811.40px;font-size:15px;line-height:20px;color:#3a3f4b;transform:scaleX(0.9418);transform-origin:0 0;">Victim</div>
<div class="a t" style="left:380.70px;top:811.40px;font-size:15px;line-height:20px;color:#3a3f4b;transform:scaleX(0.9700);transform-origin:0 0;">Dilip</div>
<div class="a t" style="left:476.80px;top:811.40px;font-size:15px;line-height:20px;color:#3a3f4b;transform:scaleX(0.9845);transform-origin:0 0;">victimdilip</div>
<div class="a" style="left:547px;top:815px;width:14px;height:10px;background:#b5b9c2;border-radius:4px 4px 0 0"></div>
<div class="a t" style="left:564.20px;top:811.40px;font-size:15px;line-height:20px;color:#3a3f4b;transform:scaleX(0.9213);transform-origin:0 0;">@gmail.com</div>
<div class="a t" style="left:789.60px;top:811.40px;font-size:15px;line-height:20px;color:#3a3f4b;transform:scaleX(0.9161);transform-origin:0 0;">3234552112</div>
<div class="a" style="left:885px;top:805px;width:10px;height:10px;background:#8e929c;"></div>
<div class="a" style="left:895px;top:805px;width:10px;height:10px;background:#cdbfb2;"></div>
<div class="a" style="left:905px;top:805px;width:10px;height:10px;background:#b4c0d0;"></div>
<div class="a" style="left:915px;top:805px;width:10px;height:10px;background:#eee8e0;"></div>
<div class="a" style="left:925px;top:805px;width:10px;height:10px;background:#9a9ca6;"></div>
<div class="a" style="left:935px;top:805px;width:10px;height:10px;background:#a9b3c6;"></div>
<div class="a" style="left:945px;top:805px;width:10px;height:10px;background:#b0b2b8;"></div>
<div class="a" style="left:955px;top:805px;width:10px;height:10px;background:#7c8296;"></div>
<div class="a" style="left:965px;top:805px;width:10px;height:10px;background:#a9b3c6;"></div>
<div class="a" style="left:885px;top:825px;width:10px;height:10px;background:#8e929c;"></div>
<div class="a" style="left:895px;top:825px;width:10px;height:10px;background:#c8d2de;"></div>
<div class="a" style="left:905px;top:825px;width:10px;height:10px;background:#9a9ca6;"></div>
<div class="a" style="left:915px;top:825px;width:10px;height:10px;background:#7c8296;"></div>
<div class="a" style="left:1015px;top:818px;width:10px;height:10px;background:#e4e8ee;"></div>
<div class="a" style="left:1025px;top:818px;width:10px;height:10px;background:#9a9ca6;"></div>
<div class="a" style="left:1035px;top:818px;width:10px;height:10px;background:#a9b3c6;"></div>
<div class="a" style="left:1045px;top:818px;width:10px;height:10px;background:#b4c0d0;"></div>
<div class="a" style="left:1055px;top:818px;width:10px;height:10px;background:#b4c0d0;"></div>
<div class="a" style="left:1065px;top:818px;width:10px;height:10px;background:#a9b3c6;"></div>
<div class="a" style="left:1075px;top:818px;width:10px;height:10px;background:#e4e8ee;"></div>
<div class="a" style="left:1085px;top:818px;width:10px;height:10px;background:#a9b3c6;"></div>
<div class="a" style="left:1116px;top:805px;width:10px;height:10px;background:#7c8296;"></div>
<div class="a" style="left:1126px;top:805px;width:10px;height:10px;background:#b4c0d0;"></div>
<div class="a" style="left:1136px;top:805px;width:10px;height:10px;background:#9a9ca6;"></div>
<div class="a" style="left:1116px;top:825px;width:10px;height:10px;background:#b0b2b8;"></div>
<div class="a" style="left:1126px;top:825px;width:10px;height:10px;background:#c8d2de;"></div>
<div class="a" style="left:1136px;top:825px;width:10px;height:10px;background:#a9b3c6;"></div>
<div class="a" style="left:1146px;top:825px;width:10px;height:10px;background:#e4e8ee;"></div>
<div class="a" style="left:1156px;top:825px;width:10px;height:10px;background:#eee8e0;"></div>
<div class="a" style="left:285px;top:884px;width:10px;height:10px;background:#eee8e0;"></div>
<div class="a" style="left:295px;top:884px;width:10px;height:10px;background:#c8d2de;"></div>
<div class="a" style="left:305px;top:884px;width:10px;height:10px;background:#9a9ca6;"></div>
<div class="a" style="left:315px;top:884px;width:10px;height:10px;background:#c8d2de;"></div>
<div class="a" style="left:385px;top:874px;width:10px;height:10px;background:#c4d4ea;"></div>
<div class="a" style="left:385px;top:884px;width:10px;height:10px;background:#e8eef6;"></div>
<div class="a" style="left:475px;top:884px;width:10px;height:10px;background:#c8d2de;"></div>
<div class="a" style="left:485px;top:884px;width:10px;height:10px;background:#b4c0d0;"></div>
<div class="a" style="left:495px;top:884px;width:10px;height:10px;background:#9a9ca6;"></div>
<div class="a" style="left:505px;top:884px;width:10px;height:10px;background:#e4e8ee;"></div>
<div class="a" style="left:515px;top:884px;width:10px;height:10px;background:#9a9ca6;"></div>
<div class="a" style="left:525px;top:884px;width:10px;height:10px;background:#7c8296;"></div>
<div class="a" style="left:535px;top:884px;width:10px;height:10px;background:#b0b2b8;"></div>
<div class="a" style="left:545px;top:884px;width:10px;height:10px;background:#cdbfb2;"></div>
<div class="a" style="left:555px;top:884px;width:10px;height:10px;background:#b8bcc6;"></div>
<div class="a" style="left:565px;top:884px;width:10px;height:10px;background:#b4c0d0;"></div>
<div class="a" style="left:575px;top:884px;width:10px;height:10px;background:#cdbfb2;"></div>
<div class="a" style="left:585px;top:884px;width:10px;height:10px;background:#7c8296;"></div>
<div class="a" style="left:595px;top:884px;width:10px;height:10px;background:#a9b3c6;"></div>
<div class="a" style="left:605px;top:884px;width:10px;height:10px;background:#c8d2de;"></div>
<div class="a" style="left:615px;top:884px;width:10px;height:10px;background:#b8bcc6;"></div>
<div class="a" style="left:625px;top:884px;width:10px;height:10px;background:#7c8296;"></div>
<div class="a" style="left:635px;top:884px;width:10px;height:10px;background:#b0b2b8;"></div>
<div class="a" style="left:645px;top:884px;width:10px;height:10px;background:#eee8e0;"></div>
<div class="a" style="left:655px;top:884px;width:10px;height:10px;background:#cdbfb2;"></div>
<div class="a" style="left:665px;top:884px;width:10px;height:10px;background:#a9b3c6;"></div>
<div class="a" style="left:675px;top:884px;width:10px;height:10px;background:#c8d2de;"></div>
<div class="a" style="left:685px;top:884px;width:10px;height:10px;background:#c8d2de;"></div>
<div class="a" style="left:695px;top:884px;width:10px;height:10px;background:#eee8e0;"></div>
<div class="a" style="left:705px;top:884px;width:10px;height:10px;background:#e4e8ee;"></div>
<div class="a" style="left:715px;top:884px;width:10px;height:10px;background:#8e929c;"></div>
<div class="a" style="left:725px;top:884px;width:10px;height:10px;background:#a9b3c6;"></div>
<div class="a" style="left:735px;top:884px;width:10px;height:10px;background:#7c8296;"></div>
<div class="a" style="left:745px;top:884px;width:10px;height:10px;background:#a4aebe;"></div>
<div class="a" style="left:755px;top:884px;width:10px;height:10px;background:#a9b3c6;"></div>
<div class="a" style="left:555px;top:874px;width:10px;height:10px;background:#e2c0a0;"></div>
<div class="a" style="left:625px;top:874px;width:10px;height:10px;background:#c8d2de;"></div>
<div class="a" style="left:645px;top:874px;width:10px;height:10px;background:#9ab0cc;"></div>
<div class="a" style="left:725px;top:876px;width:10px;height:10px;background:#9a9ca6;"></div>
<div class="a" style="left:785px;top:876px;width:10px;height:10px;background:#c8d2de;"></div>
<div class="a" style="left:795px;top:876px;width:10px;height:10px;background:#e4e8ee;"></div>
<div class="a" style="left:805px;top:876px;width:10px;height:10px;background:#d5ccc4;"></div>
<div class="a" style="left:815px;top:876px;width:10px;height:10px;background:#eee8e0;"></div>
<div class="a" style="left:825px;top:876px;width:10px;height:10px;background:#7c8296;"></div>
<div class="a" style="left:835px;top:876px;width:10px;height:10px;background:#b4c0d0;"></div>
<div class="a" style="left:845px;top:876px;width:10px;height:10px;background:#f2f4f7;"></div>
<div class="a" style="left:855px;top:876px;width:10px;height:10px;background:#8e929c;"></div>
<div class="a" style="left:885px;top:865px;width:10px;height:10px;background:#d5ccc4;"></div>
<div class="a" style="left:895px;top:865px;width:10px;height:10px;background:#c8d2de;"></div>
<div class="a" style="left:925px;top:864px;width:10px;height:10px;background:#d5ccc4;"></div>
<div class="a" style="left:895px;top:875px;width:10px;height:10px;background:#8e929c;"></div>
<div class="a" style="left:885px;top:885px;width:10px;height:10px;background:#b8bcc6;"></div>
<div class="a" style="left:885px;top:895px;width:10px;height:10px;background:#e4e8ee;"></div>
<div class="a" style="left:895px;top:895px;width:10px;height:10px;background:#f2f4f7;"></div>
<div class="a" style="left:905px;top:895px;width:10px;height:10px;background:#cdbfb2;"></div>
<div class="a" style="left:915px;top:895px;width:10px;height:10px;background:#a4aebe;"></div>
<div class="a" style="left:1015px;top:874px;width:10px;height:10px;background:#f2f4f7;"></div>
<div class="a" style="left:1015px;top:884px;width:10px;height:10px;background:#e4e8ee;"></div>
<div class="a" style="left:1025px;top:884px;width:10px;height:10px;background:#a9b3c6;"></div>
<div class="a" style="left:1035px;top:884px;width:10px;height:10px;background:#c8d2de;"></div>
<div class="a" style="left:1045px;top:884px;width:10px;height:10px;background:#b8bcc6;"></div>
<div class="a" style="left:1055px;top:884px;width:10px;height:10px;background:#7c8296;"></div>
<div class="a" style="left:1065px;top:884px;width:10px;height:10px;background:#d5ccc4;"></div>
<div class="a" style="left:1075px;top:884px;width:10px;height:10px;background:#8e929c;"></div>
<div class="a" style="left:1085px;top:884px;width:10px;height:10px;background:#a4aebe;"></div>
<div class="a" style="left:1116px;top:870px;width:10px;height:10px;background:#3c4050;"></div>
<div class="a" style="left:1116px;top:885px;width:10px;height:10px;background:#d5ccc4;"></div>
<div class="a" style="left:1116px;top:895px;width:10px;height:10px;background:#b8bcc6;"></div>
<div class="a" style="left:1126px;top:895px;width:10px;height:10px;background:#c8d2de;"></div>
<div class="a" style="left:1136px;top:895px;width:10px;height:10px;background:#a9b3c6;"></div>
<div class="a" style="left:1146px;top:895px;width:10px;height:10px;background:#a9b3c6;"></div>
<div class="a" style="left:1156px;top:895px;width:10px;height:10px;background:#7c8296;"></div>
<div class="a" style="left:285px;top:943px;width:10px;height:10px;background:#b4c0d0;"></div>
<div class="a" style="left:295px;top:943px;width:10px;height:10px;background:#cdbfb2;"></div>
<div class="a" style="left:305px;top:943px;width:10px;height:10px;background:#f2f4f7;"></div>
<div class="a" style="left:315px;top:943px;width:10px;height:10px;background:#8e929c;"></div>
<div class="a" style="left:325px;top:943px;width:10px;height:10px;background:#cdbfb2;"></div>
<div class="a" style="left:385px;top:943px;width:10px;height:10px;background:#d5ccc4;"></div>
<div class="a" style="left:395px;top:943px;width:10px;height:10px;background:#b4c0d0;"></div>
<div class="a" style="left:405px;top:943px;width:10px;height:10px;background:#9a9ca6;"></div>
<div class="a" style="left:415px;top:943px;width:10px;height:10px;background:#eee8e0;"></div>
<div class="a" style="left:475px;top:943px;width:10px;height:10px;background:#a9b3c6;"></div>
<div class="a" style="left:485px;top:943px;width:10px;height:10px;background:#f2f4f7;"></div>
<div class="a" style="left:495px;top:943px;width:10px;height:10px;background:#7c8296;"></div>
<div class="a" style="left:505px;top:943px;width:10px;height:10px;background:#c8d2de;"></div>
<div class="a" style="left:515px;top:943px;width:10px;height:10px;background:#f2f4f7;"></div>
<div class="a" style="left:525px;top:943px;width:10px;height:10px;background:#b0b2b8;"></div>
<div class="a" style="left:535px;top:943px;width:10px;height:10px;background:#8e929c;"></div>
<div class="a" style="left:545px;top:943px;width:10px;height:10px;background:#8e929c;"></div>
<div class="a" style="left:555px;top:943px;width:10px;height:10px;background:#a4aebe;"></div>
<div class="a" style="left:565px;top:943px;width:10px;height:10px;background:#8e929c;"></div>
<div class="a" style="left:575px;top:943px;width:10px;height:10px;background:#c8d2de;"></div>
<div class="a" style="left:585px;top:943px;width:10px;height:10px;background:#d5ccc4;"></div>
<div class="a" style="left:595px;top:943px;width:10px;height:10px;background:#c8d2de;"></div>
<div class="a" style="left:605px;top:943px;width:10px;height:10px;background:#f2f4f7;"></div>
<div class="a" style="left:615px;top:943px;width:10px;height:10px;background:#d5ccc4;"></div>
<div class="a" style="left:625px;top:943px;width:10px;height:10px;background:#a9b3c6;"></div>
<div class="a" style="left:635px;top:943px;width:10px;height:10px;background:#b0b2b8;"></div>
<div class="a" style="left:645px;top:943px;width:10px;height:10px;background:#a9b3c6;"></div>
<div class="a" style="left:655px;top:943px;width:10px;height:10px;background:#b8bcc6;"></div>
<div class="a" style="left:665px;top:943px;width:10px;height:10px;background:#d5ccc4;"></div>
<div class="a" style="left:675px;top:943px;width:10px;height:10px;background:#a4aebe;"></div>
<div class="a" style="left:685px;top:943px;width:10px;height:10px;background:#eee8e0;"></div>
<div class="a" style="left:695px;top:943px;width:10px;height:10px;background:#a9b3c6;"></div>
<div class="a" style="left:705px;top:943px;width:10px;height:10px;background:#9a9ca6;"></div>
<div class="a" style="left:715px;top:943px;width:10px;height:10px;background:#a4aebe;"></div>
<div class="a" style="left:725px;top:943px;width:10px;height:10px;background:#a4aebe;"></div>
<div class="a" style="left:735px;top:943px;width:10px;height:10px;background:#b8bcc6;"></div>
<div class="a" style="left:745px;top:943px;width:10px;height:10px;background:#eee8e0;"></div>
<div class="a" style="left:755px;top:943px;width:10px;height:10px;background:#c8d2de;"></div>
<div class="a" style="left:785px;top:943px;width:10px;height:10px;background:#eee8e0;"></div>
<div class="a" style="left:795px;top:943px;width:10px;height:10px;background:#b0b2b8;"></div>
<div class="a" style="left:805px;top:943px;width:10px;height:10px;background:#d5ccc4;"></div>
<div class="a" style="left:815px;top:943px;width:10px;height:10px;background:#b8bcc6;"></div>
<div class="a" style="left:825px;top:943px;width:10px;height:10px;background:#a4aebe;"></div>
<div class="a" style="left:835px;top:943px;width:10px;height:10px;background:#b4c0d0;"></div>
<div class="a" style="left:845px;top:943px;width:10px;height:10px;background:#eee8e0;"></div>
<div class="a" style="left:855px;top:943px;width:10px;height:10px;background:#8e929c;"></div>
<div class="a" style="left:885px;top:934px;width:10px;height:10px;background:#9a9ca6;"></div>
<div class="a" style="left:895px;top:934px;width:10px;height:10px;background:#d5ccc4;"></div>
<div class="a" style="left:905px;top:934px;width:10px;height:10px;background:#8e929c;"></div>
<div class="a" style="left:915px;top:934px;width:10px;height:10px;background:#cdbfb2;"></div>
<div class="a" style="left:925px;top:934px;width:10px;height:10px;background:#c8d2de;"></div>
<div class="a" style="left:935px;top:934px;width:10px;height:10px;background:#a9b3c6;"></div>
<div class="a" style="left:945px;top:934px;width:10px;height:10px;background:#d5ccc4;"></div>
<div class="a" style="left:955px;top:934px;width:10px;height:10px;background:#9a9ca6;"></div>
<div class="a" style="left:965px;top:934px;width:10px;height:10px;background:#e4e8ee;"></div>
<div class="a" style="left:885px;top:954px;width:10px;height:10px;background:#f2f4f7;"></div>
<div class="a" style="left:895px;top:954px;width:10px;height:10px;background:#b8bcc6;"></div>
<div class="a" style="left:905px;top:954px;width:10px;height:10px;background:#cdbfb2;"></div>
<div class="a" style="left:915px;top:954px;width:10px;height:10px;background:#a4aebe;"></div>
<div class="a" style="left:1015px;top:943px;width:10px;height:10px;background:#e4e8ee;"></div>
<div class="a" style="left:1025px;top:943px;width:10px;height:10px;background:#b4c0d0;"></div>
<div class="a" style="left:1035px;top:943px;width:10px;height:10px;background:#b4c0d0;"></div>
<div class="a" style="left:1055px;top:943px;width:10px;height:10px;background:#b0b2b8;"></div>
<div class="a" style="left:1065px;top:943px;width:10px;height:10px;background:#d5ccc4;"></div>
<div class="a" style="left:1075px;top:943px;width:10px;height:10px;background:#a9b3c6;"></div>
<div class="a" style="left:1085px;top:943px;width:10px;height:10px;background:#cdbfb2;"></div>
<div class="a" style="left:1116px;top:934px;width:10px;height:10px;background:#d5ccc4;"></div>
<div class="a" style="left:1126px;top:934px;width:10px;height:10px;background:#b4c0d0;"></div>
<div class="a" style="left:1136px;top:934px;width:10px;height:10px;background:#7c8296;"></div>
<div class="a" style="left:1116px;top:954px;width:10px;height:10px;background:#b8bcc6;"></div>
<div class="a" style="left:1126px;top:954px;width:10px;height:10px;background:#cdbfb2;"></div>
<div class="a" style="left:1136px;top:954px;width:10px;height:10px;background:#b0b2b8;"></div>
<div class="a" style="left:1146px;top:954px;width:10px;height:10px;background:#b4c0d0;"></div>
<div class="a" style="left:1156px;top:954px;width:10px;height:10px;background:#b0b2b8;"></div>
<div class="a" style="left:285px;top:1004px;width:10px;height:10px;background:#7c8296;"></div>
<div class="a" style="left:295px;top:1004px;width:10px;height:10px;background:#b8bcc6;"></div>
<div class="a" style="left:305px;top:1004px;width:10px;height:10px;background:#a4aebe;"></div>
<div class="a" style="left:315px;top:1004px;width:10px;height:10px;background:#b4c0d0;"></div>
<div class="a" style="left:325px;top:1004px;width:10px;height:10px;background:#8e929c;"></div>
<div class="a" style="left:335px;top:1004px;width:10px;height:10px;background:#eee8e0;"></div>
<div class="a" style="left:345px;top:1004px;width:10px;height:10px;background:#b4c0d0;"></div>
<div class="a" style="left:355px;top:1004px;width:10px;height:10px;background:#e4e8ee;"></div>
<div class="a" style="left:385px;top:1004px;width:10px;height:10px;background:#cdbfb2;"></div>
<div class="a" style="left:395px;top:1004px;width:10px;height:10px;background:#a9b3c6;"></div>
<div class="a" style="left:405px;top:1004px;width:10px;height:10px;background:#cdbfb2;"></div>
<div class="a" style="left:415px;top:1004px;width:10px;height:10px;background:#cdbfb2;"></div>
<div class="a" style="left:425px;top:1004px;width:10px;height:10px;background:#e4e8ee;"></div>
<div class="a" style="left:475px;top:1004px;width:10px;height:10px;background:#eee8e0;"></div>
<div class="a" style="left:485px;top:1004px;width:10px;height:10px;background:#e4e8ee;"></div>
<div class="a" style="left:495px;top:1004px;width:10px;height:10px;background:#9a9ca6;"></div>
<div class="a" style="left:505px;top:1004px;width:10px;height:10px;background:#d5ccc4;"></div>
<div class="a" style="left:515px;top:1004px;width:10px;height:10px;background:#b0b2b8;"></div>
<div class="a" style="left:525px;top:1004px;width:10px;height:10px;background:#c8d2de;"></div>
<div class="a" style="left:535px;top:1004px;width:10px;height:10px;background:#cdbfb2;"></div>
<div class="a" style="left:545px;top:1004px;width:10px;height:10px;background:#b8bcc6;"></div>
<div class="a" style="left:555px;top:1004px;width:10px;height:10px;background:#b8bcc6;"></div>
<div class="a" style="left:565px;top:1004px;width:10px;height:10px;background:#9a9ca6;"></div>
<div class="a" style="left:575px;top:1004px;width:10px;height:10px;background:#cdbfb2;"></div>
<div class="a" style="left:585px;top:1004px;width:10px;height:10px;background:#b4c0d0;"></div>
<div class="a" style="left:595px;top:1004px;width:10px;height:10px;background:#7c8296;"></div>
<div class="a" style="left:605px;top:1004px;width:10px;height:10px;background:#8e929c;"></div>
<div class="a" style="left:615px;top:1004px;width:10px;height:10px;background:#c8d2de;"></div>
<div class="a" style="left:625px;top:1004px;width:10px;height:10px;background:#c8d2de;"></div>
<div class="a" style="left:635px;top:1004px;width:10px;height:10px;background:#8e929c;"></div>
<div class="a" style="left:645px;top:1004px;width:10px;height:10px;background:#cdbfb2;"></div>
<div class="a" style="left:655px;top:1004px;width:10px;height:10px;background:#a4aebe;"></div>
<div class="a" style="left:665px;top:1004px;width:10px;height:10px;background:#b0b2b8;"></div>
<div class="a" style="left:675px;top:1004px;width:10px;height:10px;background:#7c8296;"></div>
<div class="a" style="left:685px;top:1004px;width:10px;height:10px;background:#c8d2de;"></div>
<div class="a" style="left:695px;top:1004px;width:10px;height:10px;background:#eee8e0;"></div>
<div class="a" style="left:705px;top:1004px;width:10px;height:10px;background:#eee8e0;"></div>
<div class="a" style="left:715px;top:1004px;width:10px;height:10px;background:#a4aebe;"></div>
<div class="a" style="left:725px;top:1004px;width:10px;height:10px;background:#9a9ca6;"></div>
<div class="a" style="left:745px;top:1004px;width:10px;height:10px;background:#d5ccc4;"></div>
<div class="a" style="left:755px;top:1004px;width:10px;height:10px;background:#b0b2b8;"></div>
<div class="a" style="left:795px;top:1004px;width:10px;height:10px;background:#f2f4f7;"></div>
<div class="a" style="left:815px;top:1004px;width:10px;height:10px;background:#b0b2b8;"></div>
<div class="a" style="left:835px;top:1004px;width:10px;height:10px;background:#eee8e0;"></div>
<div class="a" style="left:855px;top:1004px;width:10px;height:10px;background:#f2f4f7;"></div>
<div class="a" style="left:885px;top:994px;width:10px;height:10px;background:#7c8296;"></div>
<div class="a" style="left:895px;top:994px;width:10px;height:10px;background:#b4c0d0;"></div>
<div class="a" style="left:905px;top:994px;width:10px;height:10px;background:#b4c0d0;"></div>
<div class="a" style="left:915px;top:994px;width:10px;height:10px;background:#b4c0d0;"></div>
<div class="a" style="left:925px;top:994px;width:10px;height:10px;background:#b4c0d0;"></div>
<div class="a" style="left:935px;top:994px;width:10px;height:10px;background:#a9b3c6;"></div>
<div class="a" style="left:945px;top:994px;width:10px;height:10px;background:#d5ccc4;"></div>
<div class="a" style="left:955px;top:994px;width:10px;height:10px;background:#eee8e0;"></div>
<div class="a" style="left:965px;top:994px;width:10px;height:10px;background:#b4c0d0;"></div>
<div class="a" style="left:885px;top:1014px;width:10px;height:10px;background:#9a9ca6;"></div>
<div class="a" style="left:895px;top:1014px;width:10px;height:10px;background:#e4e8ee;"></div>
<div class="a" style="left:905px;top:1014px;width:10px;height:10px;background:#a9b3c6;"></div>
<div class="a" style="left:915px;top:1014px;width:10px;height:10px;background:#e4e8ee;"></div>
<div class="a" style="left:1015px;top:1004px;width:10px;height:10px;background:#d5ccc4;"></div>
<div class="a" style="left:1025px;top:1004px;width:10px;height:10px;background:#cdbfb2;"></div>
<div class="a" style="left:1035px;top:1004px;width:10px;height:10px;background:#a9b3c6;"></div>
<div class="a" style="left:1055px;top:1004px;width:10px;height:10px;background:#8e929c;"></div>
<div class="a" style="left:1065px;top:1004px;width:10px;height:10px;background:#c8d2de;"></div>
<div class="a" style="left:1075px;top:1004px;width:10px;height:10px;background:#9a9ca6;"></div>
<div class="a" style="left:1085px;top:1004px;width:10px;height:10px;background:#a9b3c6;"></div>
<div class="a" style="left:1116px;top:994px;width:10px;height:10px;background:#9a9ca6;"></div>
<div class="a" style="left:1126px;top:994px;width:10px;height:10px;background:#c8d2de;"></div>
<div class="a" style="left:1136px;top:994px;width:10px;height:10px;background:#cdbfb2;"></div>
<div class="a" style="left:1116px;top:1014px;width:10px;height:10px;background:#7c8296;"></div>
<div class="a" style="left:1126px;top:1014px;width:10px;height:10px;background:#a9b3c6;"></div>
<div class="a" style="left:1136px;top:1014px;width:10px;height:10px;background:#8e929c;"></div>
<div class="a" style="left:1146px;top:1014px;width:10px;height:10px;background:#c8d2de;"></div>
<div class="a" style="left:1156px;top:1014px;width:10px;height:10px;background:#9a9ca6;"></div>
<div class="a" style="left:285px;top:1064px;width:10px;height:10px;background:#a9b3c6;"></div>
<div class="a" style="left:295px;top:1064px;width:10px;height:10px;background:#b0b2b8;"></div>
<div class="a" style="left:305px;top:1064px;width:10px;height:10px;background:#e4e8ee;"></div>
<div class="a" style="left:315px;top:1064px;width:10px;height:10px;background:#c8d2de;"></div>
<div class="a" style="left:385px;top:1054px;width:10px;height:10px;background:#b4c0d0;"></div>
<div class="a" style="left:395px;top:1054px;width:10px;height:10px;background:#cdbfb2;"></div>
<div class="a" style="left:405px;top:1054px;width:10px;height:10px;background:#eee8e0;"></div>
<div class="a" style="left:415px;top:1054px;width:10px;height:10px;background:#b8bcc6;"></div>
<div class="a" style="left:425px;top:1054px;width:10px;height:10px;background:#8e929c;"></div>
<div class="a" style="left:385px;top:1074px;width:10px;height:10px;background:#c8d2de;"></div>
<div class="a" style="left:395px;top:1074px;width:10px;height:10px;background:#8e929c;"></div>
<div class="a" style="left:405px;top:1074px;width:10px;height:10px;background:#d5ccc4;"></div>
<div class="a" style="left:475px;top:1064px;width:10px;height:10px;background:#a9b3c6;"></div>
<div class="a" style="left:485px;top:1064px;width:10px;height:10px;background:#a9b3c6;"></div>
<div class="a" style="left:495px;top:1064px;width:10px;height:10px;background:#b0b2b8;"></div>
<div class="a" style="left:505px;top:1064px;width:10px;height:10px;background:#d5ccc4;"></div>
<div class="a" style="left:515px;top:1064px;width:10px;height:10px;background:#d5ccc4;"></div>
<div class="a" style="left:525px;top:1064px;width:10px;height:10px;background:#d5ccc4;"></div>
<div class="a" style="left:535px;top:1064px;width:10px;height:10px;background:#d5ccc4;"></div>
<div class="a" style="left:555px;top:1064px;width:10px;height:10px;background:#b8bcc6;"></div>
<div class="a" style="left:565px;top:1064px;width:10px;height:10px;background:#a9b3c6;"></div>
<div class="a" style="left:575px;top:1064px;width:10px;height:10px;background:#cdbfb2;"></div>
<div class="a" style="left:585px;top:1064px;width:10px;height:10px;background:#a9b3c6;"></div>
<div class="a" style="left:595px;top:1064px;width:10px;height:10px;background:#a4aebe;"></div>
<div class="a" style="left:605px;top:1064px;width:10px;height:10px;background:#8e929c;"></div>
<div class="a" style="left:615px;top:1064px;width:10px;height:10px;background:#a4aebe;"></div>
<div class="a" style="left:625px;top:1064px;width:10px;height:10px;background:#b8bcc6;"></div>
<div class="a" style="left:635px;top:1064px;width:10px;height:10px;background:#d5ccc4;"></div>
<div class="a" style="left:645px;top:1064px;width:10px;height:10px;background:#b0b2b8;"></div>
<div class="a" style="left:655px;top:1064px;width:10px;height:10px;background:#a4aebe;"></div>
<div class="a" style="left:665px;top:1064px;width:10px;height:10px;background:#cdbfb2;"></div>
<div class="a" style="left:675px;top:1064px;width:10px;height:10px;background:#7c8296;"></div>
<div class="a" style="left:685px;top:1064px;width:10px;height:10px;background:#9a9ca6;"></div>
<div class="a" style="left:695px;top:1064px;width:10px;height:10px;background:#e4e8ee;"></div>
<div class="a" style="left:705px;top:1064px;width:10px;height:10px;background:#7c8296;"></div>
<div class="a" style="left:715px;top:1064px;width:10px;height:10px;background:#8e929c;"></div>
<div class="a" style="left:725px;top:1064px;width:10px;height:10px;background:#cdbfb2;"></div>
<div class="a" style="left:795px;top:1065px;width:10px;height:10px;background:#a4aebe;"></div>
<div class="a" style="left:805px;top:1065px;width:10px;height:10px;background:#7c8296;"></div>
<div class="a" style="left:885px;top:1054px;width:10px;height:10px;background:#9a9ca6;"></div>
<div class="a" style="left:895px;top:1054px;width:10px;height:10px;background:#f2f4f7;"></div>
<div class="a" style="left:905px;top:1054px;width:10px;height:10px;background:#7c8296;"></div>
<div class="a" style="left:915px;top:1054px;width:10px;height:10px;background:#b8bcc6;"></div>
<div class="a" style="left:925px;top:1054px;width:10px;height:10px;background:#eee8e0;"></div>
<div class="a" style="left:935px;top:1054px;width:10px;height:10px;background:#b0b2b8;"></div>
<div class="a" style="left:945px;top:1054px;width:10px;height:10px;background:#a9b3c6;"></div>
<div class="a" style="left:955px;top:1054px;width:10px;height:10px;background:#a4aebe;"></div>
<div class="a" style="left:965px;top:1054px;width:10px;height:10px;background:#b0b2b8;"></div>
<div class="a" style="left:885px;top:1074px;width:10px;height:10px;background:#b8bcc6;"></div>
<div class="a" style="left:895px;top:1074px;width:10px;height:10px;background:#7c8296;"></div>
<div class="a" style="left:905px;top:1074px;width:10px;height:10px;background:#8e929c;"></div>
<div class="a" style="left:915px;top:1074px;width:10px;height:10px;background:#cdbfb2;"></div>
<div class="a" style="left:1015px;top:1064px;width:10px;height:10px;background:#8e929c;"></div>
<div class="a" style="left:1025px;top:1064px;width:10px;height:10px;background:#f2f4f7;"></div>
<div class="a" style="left:1035px;top:1064px;width:10px;height:10px;background:#e4e8ee;"></div>
<div class="a" style="left:1055px;top:1064px;width:10px;height:10px;background:#7c8296;"></div>
<div class="a" style="left:1065px;top:1064px;width:10px;height:10px;background:#7c8296;"></div>
<div class="a" style="left:1075px;top:1064px;width:10px;height:10px;background:#f2f4f7;"></div>
<div class="a" style="left:1085px;top:1064px;width:10px;height:10px;background:#7c8296;"></div>
<div class="a" style="left:1116px;top:1054px;width:10px;height:10px;background:#8e929c;"></div>
<div class="a" style="left:1126px;top:1054px;width:10px;height:10px;background:#eee8e0;"></div>
<div class="a" style="left:1136px;top:1054px;width:10px;height:10px;background:#e4e8ee;"></div>
<div class="a" style="left:1116px;top:1074px;width:10px;height:10px;background:#c8d2de;"></div>
<div class="a" style="left:1126px;top:1074px;width:10px;height:10px;background:#f2f4f7;"></div>
<div class="a" style="left:1136px;top:1074px;width:10px;height:10px;background:#f2f4f7;"></div>
<div class="a" style="left:1146px;top:1074px;width:10px;height:10px;background:#f2f4f7;"></div>
<div class="a" style="left:1156px;top:1074px;width:10px;height:10px;background:#b0b2b8;"></div>
<div class="a" style="left:285px;top:1124px;width:10px;height:10px;background:#e4e8ee;"></div>
<div class="a" style="left:295px;top:1124px;width:10px;height:10px;background:#f2f4f7;"></div>
<div class="a" style="left:305px;top:1124px;width:10px;height:10px;background:#e4e8ee;"></div>
<div class="a" style="left:315px;top:1124px;width:10px;height:10px;background:#b0b2b8;"></div>
<div class="a" style="left:385px;top:1124px;width:10px;height:10px;background:#b4c0d0;"></div>
<div class="a" style="left:475px;top:1124px;width:10px;height:10px;background:#a4aebe;"></div>
<div class="a" style="left:515px;top:1124px;width:10px;height:10px;background:#f2f4f7;"></div>
<div class="a" style="left:525px;top:1124px;width:10px;height:10px;background:#e4e8ee;"></div>
<div class="a" style="left:525px;top:1134px;width:10px;height:10px;background:#e4e8ee;"></div>
<div class="a" style="left:795px;top:1114px;width:10px;height:10px;background:#7c8296;"></div>
<div class="a" style="left:805px;top:1114px;width:10px;height:10px;background:#d5ccc4;"></div>
<div class="a" style="left:815px;top:1114px;width:10px;height:10px;background:#8e929c;"></div>
<div class="a" style="left:805px;top:1134px;width:10px;height:10px;background:#a4aebe;"></div>
<div class="a" style="left:815px;top:1134px;width:10px;height:10px;background:#9a9ca6;"></div>
<div class="a" style="left:825px;top:1134px;width:10px;height:10px;background:#9a9ca6;"></div>
<div class="a" style="left:795px;top:1144px;width:10px;height:10px;background:#d5ccc0;"></div>
<div class="a" style="left:885px;top:1114px;width:10px;height:10px;background:#f2f4f7;"></div>
<div class="a" style="left:895px;top:1114px;width:10px;height:10px;background:#b8bcc6;"></div>
<div class="a" style="left:905px;top:1114px;width:10px;height:10px;background:#d5ccc4;"></div>
<div class="a" style="left:915px;top:1114px;width:10px;height:10px;background:#b8bcc6;"></div>
<div class="a" style="left:925px;top:1114px;width:10px;height:10px;background:#e4e8ee;"></div>
<div class="a" style="left:935px;top:1114px;width:10px;height:10px;background:#a4aebe;"></div>
<div class="a" style="left:945px;top:1114px;width:10px;height:10px;background:#c8d2de;"></div>
<div class="a" style="left:955px;top:1114px;width:10px;height:10px;background:#8e929c;"></div>
<div class="a" style="left:965px;top:1114px;width:10px;height:10px;background:#d5ccc4;"></div>
<div class="a" style="left:885px;top:1134px;width:10px;height:10px;background:#f2f4f7;"></div>
<div class="a" style="left:895px;top:1134px;width:10px;height:10px;background:#a4aebe;"></div>
<div class="a" style="left:895px;top:1144px;width:10px;height:10px;background:#8e929c;"></div>
<div class="a" style="left:905px;top:1144px;width:10px;height:10px;background:#8e929c;"></div>
<div class="a" style="left:1015px;top:1124px;width:10px;height:10px;background:#a9b3c6;"></div>
<div class="a" style="left:1055px;top:1124px;width:10px;height:10px;background:#e4e8ee;"></div>
<div class="a" style="left:1075px;top:1124px;width:10px;height:10px;background:#a9b3c6;"></div>
<div class="a" style="left:1116px;top:1114px;width:10px;height:10px;background:#e4e8ee;"></div>
<div class="a" style="left:1126px;top:1114px;width:10px;height:10px;background:#d5ccc4;"></div>
<div class="a" style="left:1136px;top:1114px;width:10px;height:10px;background:#e4e8ee;"></div>
<div class="a" style="left:1116px;top:1134px;width:10px;height:10px;background:#5a6a8a;"></div>
<div class="a" style="left:1116px;top:1144px;width:10px;height:10px;background:#8e929c;"></div>
<div class="a" style="left:1126px;top:1144px;width:10px;height:10px;background:#e4e8ee;"></div>
<div class="a" style="left:1136px;top:1144px;width:10px;height:10px;background:#d5ccc4;"></div>
<div class="a" style="left:1146px;top:1144px;width:10px;height:10px;background:#c8d2de;"></div>
<div class="a" style="left:1156px;top:1144px;width:10px;height:10px;background:#c8d2de;"></div>
<div class="a" style="left:365px;top:875px;width:6px;height:16px;background:#dedee4;"></div>
<div class="a" style="left:365px;top:943px;width:6px;height:13px;background:#dedee4;"></div>
<div class="a" style="left:365px;top:1003px;width:6px;height:15px;background:#dedee4;"></div>
<div class="a" style="left:463px;top:876px;width:6px;height:15px;background:#ffffff;"></div>
<div class="a" style="left:463px;top:940px;width:6px;height:16px;background:#ffffff;"></div>
<div class="a" style="left:463px;top:1000px;width:6px;height:16px;background:#ffffff;"></div>
<div class="a" style="left:777px;top:938px;width:6px;height:16px;background:#e4e4ea;"></div>
<div class="a" style="left:777px;top:998px;width:6px;height:18px;background:#e4e4ea;"></div>
<div class="a" style="left:369px;top:1055px;width:4px;height:12px;background:#ececf0;"></div>
<div class="a" style="left:369px;top:1068px;width:4px;height:12px;background:#ececf0;"></div>
<div class="a" style="left:369px;top:1121px;width:4px;height:12px;background:#ececf0;"></div>
<div class="a" style="left:779px;top:1063px;width:4px;height:14px;background:#ececf0;"></div>
<div class="a" style="left:1197px;top:811px;width:67px;height:22px;background:#4a9fdc;border-radius:2px"></div>
<div class="a t" style="left:1203.60px;top:813.32px;font-size:13.5px;line-height:18px;color:#fff;transform:scaleX(0.9031);transform-origin:0 0;">View Auth</div>
<div class="a" style="left:1284px;top:804.5px;width:77px;height:24px;background:#4a9fdc;border-radius:12px"></div>
<div class="a" style="left:1338px;top:807px;width:19px;height:19px;background:#fff;border-radius:50%"></div>
<div class="a t" style="left:1296.60px;top:809.79px;font-size:11px;line-height:14px;color:#fff;transform:scaleX(0.8809);transform-origin:0 0;">ACTIVE</div>
<div class="a" style="left:1420px;top:798px;width:120px;height:34px;background:#fff;border:1px solid #dfe2e8;border-radius:3px;"></div>
<div class="a t" style="left:1433.00px;top:804.70px;font-size:15px;line-height:20px;color:#3a3f4b;transform:scaleX(0.9261);transform-origin:0 0;">Superadmin</div>
<svg class="a" style="left:1525px;top:812px" width="10" height="7" viewBox="0 0 10 7"><path d="M1.5 1.5L5 5 8.5 1.5" stroke="#3a3f4b" stroke-width="1.6" fill="none"/></svg>
<div class="a" style="left:1561px;top:804px;width:101px;height:24px;background:#4a9fdc;border-radius:12px"></div>
<div class="a" style="left:1635px;top:807px;width:19px;height:19px;background:#fff;border-radius:50%"></div>
<div class="a t" style="left:1582.70px;top:810.19px;font-size:11px;line-height:14px;color:#fff;transform:scaleX(0.8608);transform-origin:0 0;">ACTIVE</div>
<svg class="a" style="left:1707px;top:810px" width="22" height="20" viewBox="0 0 22 20"><path d="M10 5H2.5v13h13v-7" stroke="#4a9fdc" stroke-width="2.4" fill="none"/><path d="M7.5 14.5l1-4.2 8.3-8.3 3.2 3.2-8.3 8.3z" fill="#4a9fdc"/></svg>
<div class="a" style="left:1197px;top:873px;width:67px;height:22px;background:#4a9fdc;border-radius:2px"></div>
<div class="a t" style="left:1203.60px;top:875.32px;font-size:13.5px;line-height:18px;color:#fff;transform:scaleX(0.9031);transform-origin:0 0;">View Auth</div>
<div class="a" style="left:1284px;top:866.5px;width:77px;height:24px;background:#4a9fdc;border-radius:12px"></div>
<div class="a" style="left:1338px;top:869px;width:19px;height:19px;background:#fff;border-radius:50%"></div>
<div class="a t" style="left:1296.60px;top:871.79px;font-size:11px;line-height:14px;color:#fff;transform:scaleX(0.8809);transform-origin:0 0;">ACTIVE</div>
<div class="a" style="left:1420px;top:860px;width:120px;height:34px;background:#fff;border:1px solid #dfe2e8;border-radius:3px;"></div>
<div class="a t" style="left:1433.00px;top:866.70px;font-size:15px;line-height:20px;color:#3a3f4b;transform:scaleX(0.8843);transform-origin:0 0;">User</div>
<svg class="a" style="left:1525px;top:874px" width="10" height="7" viewBox="0 0 10 7"><path d="M1.5 1.5L5 5 8.5 1.5" stroke="#3a3f4b" stroke-width="1.6" fill="none"/></svg>
<div class="a" style="left:1561px;top:866px;width:101px;height:24px;background:#4a9fdc;border-radius:12px"></div>
<div class="a" style="left:1635px;top:869px;width:19px;height:19px;background:#fff;border-radius:50%"></div>
<div class="a t" style="left:1582.70px;top:872.19px;font-size:11px;line-height:14px;color:#fff;transform:scaleX(0.8608);transform-origin:0 0;">ACTIVE</div>
<svg class="a" style="left:1707px;top:872px" width="22" height="20" viewBox="0 0 22 20"><path d="M10 5H2.5v13h13v-7" stroke="#4a9fdc" stroke-width="2.4" fill="none"/><path d="M7.5 14.5l1-4.2 8.3-8.3 3.2 3.2-8.3 8.3z" fill="#4a9fdc"/></svg>
<div class="a" style="left:1197px;top:935px;width:67px;height:22px;background:#4a9fdc;border-radius:2px"></div>
<div class="a t" style="left:1203.60px;top:937.32px;font-size:13.5px;line-height:18px;color:#fff;transform:scaleX(0.9031);transform-origin:0 0;">View Auth</div>
<div class="a" style="left:1284px;top:928.5px;width:77px;height:24px;background:#4a9fdc;border-radius:12px"></div>
<div class="a" style="left:1338px;top:931px;width:19px;height:19px;background:#fff;border-radius:50%"></div>
<div class="a t" style="left:1296.60px;top:933.79px;font-size:11px;line-height:14px;color:#fff;transform:scaleX(0.8809);transform-origin:0 0;">ACTIVE</div>
<div class="a" style="left:1420px;top:922px;width:120px;height:34px;background:#fff;border:1px solid #dfe2e8;border-radius:3px;"></div>
<div class="a t" style="left:1433.00px;top:928.70px;font-size:15px;line-height:20px;color:#3a3f4b;transform:scaleX(0.9261);transform-origin:0 0;">Superadmin</div>
<svg class="a" style="left:1525px;top:936px" width="10" height="7" viewBox="0 0 10 7"><path d="M1.5 1.5L5 5 8.5 1.5" stroke="#3a3f4b" stroke-width="1.6" fill="none"/></svg>
<div class="a" style="left:1561px;top:928px;width:101px;height:24px;background:#e5504a;border-radius:12px"></div>
<div class="a" style="left:1563px;top:930px;width:19px;height:19px;background:#fff;border-radius:50%;border:1px solid #e5504a"></div>
<div class="a t" style="left:1598.40px;top:934.19px;font-size:11px;line-height:14px;color:#fff;transform:scaleX(0.9118);transform-origin:0 0;">IN-ACTIVE</div>
<svg class="a" style="left:1707px;top:934px" width="22" height="20" viewBox="0 0 22 20"><path d="M10 5H2.5v13h13v-7" stroke="#4a9fdc" stroke-width="2.4" fill="none"/><path d="M7.5 14.5l1-4.2 8.3-8.3 3.2 3.2-8.3 8.3z" fill="#4a9fdc"/></svg>
<div class="a" style="left:1197px;top:997px;width:67px;height:22px;background:#4a9fdc;border-radius:2px"></div>
<div class="a t" style="left:1203.60px;top:999.32px;font-size:13.5px;line-height:18px;color:#fff;transform:scaleX(0.9031);transform-origin:0 0;">View Auth</div>
<div class="a" style="left:1284px;top:990.5px;width:77px;height:24px;background:#4a9fdc;border-radius:12px"></div>
<div class="a" style="left:1338px;top:993px;width:19px;height:19px;background:#fff;border-radius:50%"></div>
<div class="a t" style="left:1296.60px;top:995.79px;font-size:11px;line-height:14px;color:#fff;transform:scaleX(0.8809);transform-origin:0 0;">ACTIVE</div>
<div class="a" style="left:1420px;top:984px;width:120px;height:34px;background:#fff;border:1px solid #dfe2e8;border-radius:3px;"></div>
<div class="a t" style="left:1433.00px;top:990.70px;font-size:15px;line-height:20px;color:#3a3f4b;transform:scaleX(0.9261);transform-origin:0 0;">Superadmin</div>
<svg class="a" style="left:1525px;top:998px" width="10" height="7" viewBox="0 0 10 7"><path d="M1.5 1.5L5 5 8.5 1.5" stroke="#3a3f4b" stroke-width="1.6" fill="none"/></svg>
<div class="a" style="left:1561px;top:990px;width:101px;height:24px;background:#4a9fdc;border-radius:12px"></div>
<div class="a" style="left:1635px;top:993px;width:19px;height:19px;background:#fff;border-radius:50%"></div>
<div class="a t" style="left:1582.70px;top:996.19px;font-size:11px;line-height:14px;color:#fff;transform:scaleX(0.8608);transform-origin:0 0;">ACTIVE</div>
<svg class="a" style="left:1707px;top:996px" width="22" height="20" viewBox="0 0 22 20"><path d="M10 5H2.5v13h13v-7" stroke="#4a9fdc" stroke-width="2.4" fill="none"/><path d="M7.5 14.5l1-4.2 8.3-8.3 3.2 3.2-8.3 8.3z" fill="#4a9fdc"/></svg>
<div class="a" style="left:1197px;top:1060px;width:67px;height:22px;background:#4a9fdc;border-radius:2px"></div>
<div class="a t" style="left:1203.60px;top:1062.32px;font-size:13.5px;line-height:18px;color:#fff;transform:scaleX(0.9031);transform-origin:0 0;">View Auth</div>
<div class="a" style="left:1284px;top:1053.5px;width:77px;height:24px;background:#4a9fdc;border-radius:12px"></div>
<div class="a" style="left:1338px;top:1056px;width:19px;height:19px;background:#fff;border-radius:50%"></div>
<div class="a t" style="left:1296.60px;top:1058.79px;font-size:11px;line-height:14px;color:#fff;transform:scaleX(0.8809);transform-origin:0 0;">ACTIVE</div>
<div class="a" style="left:1420px;top:1047px;width:120px;height:34px;background:#fff;border:1px solid #dfe2e8;border-radius:3px;"></div>
<div class="a t" style="left:1433.00px;top:1053.70px;font-size:15px;line-height:20px;color:#3a3f4b;transform:scaleX(0.8843);transform-origin:0 0;">User</div>
<svg class="a" style="left:1525px;top:1061px" width="10" height="7" viewBox="0 0 10 7"><path d="M1.5 1.5L5 5 8.5 1.5" stroke="#3a3f4b" stroke-width="1.6" fill="none"/></svg>
<div class="a" style="left:1561px;top:1053px;width:101px;height:24px;background:#4a9fdc;border-radius:12px"></div>
<div class="a" style="left:1635px;top:1056px;width:19px;height:19px;background:#fff;border-radius:50%"></div>
<div class="a t" style="left:1582.70px;top:1059.19px;font-size:11px;line-height:14px;color:#fff;transform:scaleX(0.8608);transform-origin:0 0;">ACTIVE</div>
<svg class="a" style="left:1707px;top:1059px" width="22" height="20" viewBox="0 0 22 20"><path d="M10 5H2.5v13h13v-7" stroke="#4a9fdc" stroke-width="2.4" fill="none"/><path d="M7.5 14.5l1-4.2 8.3-8.3 3.2 3.2-8.3 8.3z" fill="#4a9fdc"/></svg>
<div class="a" style="left:1197px;top:1122px;width:67px;height:22px;background:#4a9fdc;border-radius:2px"></div>
<div class="a t" style="left:1203.60px;top:1124.32px;font-size:13.5px;line-height:18px;color:#fff;transform:scaleX(0.9031);transform-origin:0 0;">View Auth</div>
<div class="a" style="left:1284px;top:1115.5px;width:77px;height:24px;background:#4a9fdc;border-radius:12px"></div>
<div class="a" style="left:1338px;top:1118px;width:19px;height:19px;background:#fff;border-radius:50%"></div>
<div class="a t" style="left:1296.60px;top:1120.79px;font-size:11px;line-height:14px;color:#fff;transform:scaleX(0.8809);transform-origin:0 0;">ACTIVE</div>
<div class="a" style="left:1420px;top:1109px;width:120px;height:34px;background:#fff;border:1px solid #dfe2e8;border-radius:3px;"></div>
<div class="a t" style="left:1433.00px;top:1115.70px;font-size:15px;line-height:20px;color:#3a3f4b;transform:scaleX(0.8843);transform-origin:0 0;">User</div>
<svg class="a" style="left:1525px;top:1123px" width="10" height="7" viewBox="0 0 10 7"><path d="M1.5 1.5L5 5 8.5 1.5" stroke="#3a3f4b" stroke-width="1.6" fill="none"/></svg>
<div class="a" style="left:1561px;top:1115px;width:101px;height:24px;background:#4a9fdc;border-radius:12px"></div>
<div class="a" style="left:1635px;top:1118px;width:19px;height:19px;background:#fff;border-radius:50%"></div>
<div class="a t" style="left:1582.70px;top:1121.19px;font-size:11px;line-height:14px;color:#fff;transform:scaleX(0.8608);transform-origin:0 0;">ACTIVE</div>
<svg class="a" style="left:1707px;top:1121px" width="22" height="20" viewBox="0 0 22 20"><path d="M10 5H2.5v13h13v-7" stroke="#4a9fdc" stroke-width="2.4" fill="none"/><path d="M7.5 14.5l1-4.2 8.3-8.3 3.2 3.2-8.3 8.3z" fill="#4a9fdc"/></svg>
</div>
<div class="a" style="left:1819px;top:47px;width:12px;height:1108px;background:#ececec;"></div>
<div class="a" style="left:1819px;top:47px;width:12px;height:25px;background:#f0f0f0;"></div>
<div class="a" style="left:1819px;top:72px;width:12px;height:827px;background:#c6c6c6;"></div>
<svg class="a" style="left:1820px;top:50px" width="10" height="8" viewBox="0 0 10 8"><path d="M1.5 6L5 2.5 8.5 6" stroke="#505050" stroke-width="1.5" fill="none"/></svg>
<svg class="a" style="left:1820px;top:1144px" width="10" height="8" viewBox="0 0 10 8"><path d="M1.5 2L5 5.5 8.5 2" stroke="#505050" stroke-width="1.5" fill="none"/></svg>
</body></html>
